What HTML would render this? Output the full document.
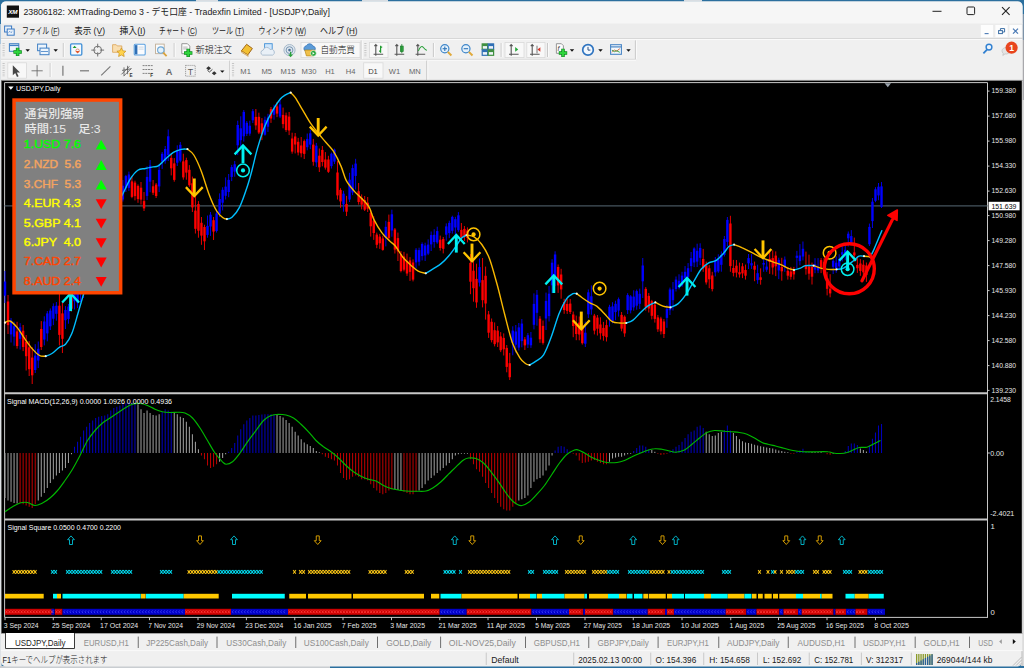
<!DOCTYPE html>
<html lang="ja"><head><meta charset="utf-8"><title>23806182: XMTrading-Demo 3 - [USDJPY,Daily]</title>
<style>
html,body{margin:0;padding:0;background:#f0f0f0;overflow:hidden}
svg{display:block;font-family:"Liberation Sans", "Noto Sans CJK JP", sans-serif}
text{white-space:pre}
</style></head><body>
<svg width="1024" height="668" viewBox="0 0 1024 668">
<rect x="0.00" y="0.00" width="1024.00" height="668.00" fill="#2b6f9e" />
<rect x="0.00" y="24.00" width="1.60" height="20.00" fill="#a9c6de" />
<rect x="0.00" y="44.00" width="1.60" height="624.00" fill="#dfe3e6" />
<rect x="1021.00" y="14.00" width="3.00" height="26.00" fill="#7d93a8" />
<rect x="1021.00" y="40.00" width="3.00" height="60.00" fill="#a8a8ac" />
<rect x="1021.00" y="100.00" width="3.00" height="566.00" fill="#dcdcdc" />
<rect x="0.00" y="666.00" width="330.00" height="2.00" fill="#c9cdd1" />
<rect x="196.00" y="0.00" width="22.00" height="1.60" fill="#d8dde2" />
<rect x="362.00" y="0.00" width="26.00" height="1.60" fill="#d8dde2" />
<rect x="684.00" y="0.00" width="18.00" height="1.60" fill="#d8dde2" />
<rect x="1" y="1.5" width="1021.5" height="665" rx="5" ry="5" fill="#f0f0f0"/>
<line x1="1.70" y1="80.00" x2="1.70" y2="650.00" stroke="#8a8a8a" stroke-width="1" />
<line x1="1022.00" y1="82.00" x2="1022.00" y2="666.00" stroke="#bcbcbc" stroke-width="1" />
<path d="M1 24 V6.5 Q1 1.5 6 1.5 H1017.5 Q1022.5 1.5 1022.5 6.5 V24 Z" fill="#f6f6f6"/>
<rect x="1.00" y="23.50" width="1021.50" height="15.00" fill="#ececec" />
<line x1="1.00" y1="38.60" x2="1022.50" y2="38.60" stroke="#d4d4d4" stroke-width="1" />
<line x1="1.00" y1="39.60" x2="1022.50" y2="39.60" stroke="#fbfbfb" stroke-width="1" />
<rect x="1.00" y="40.00" width="1021.50" height="40.00" fill="#f0f0f0" />
<line x1="1.00" y1="59.30" x2="636.00" y2="59.30" stroke="#d6d6d6" stroke-width="1" />
<line x1="1.00" y1="60.30" x2="636.00" y2="60.30" stroke="#fafafa" stroke-width="1" />
<rect x="6.80" y="5.50" width="12.20" height="12.20" fill="#111" />
<text x="12.90" y="13.82" font-size="5.6" fill="#fff" text-anchor="middle" font-weight="bold" textLength="9.50" lengthAdjust="spacingAndGlyphs" font-style="italic">XM</text>
<text x="23.40" y="15.34" font-size="9.0" fill="#1a1a1a" textLength="306.50" lengthAdjust="spacingAndGlyphs" >23806182: XMTrading-Demo 3 - デモ口座 - Tradexfin Limited - [USDJPY,Daily]</text>
<line x1="932.50" y1="11.30" x2="941.50" y2="11.30" stroke="#222" stroke-width="1" />
<rect x="967" y="7" width="7.6" height="7.6" rx="1" fill="none" stroke="#222" stroke-width="1"/>
<path d="M1002 7.2 L1009.6 14.8 M1009.6 7.2 L1002 14.8" stroke="#222" stroke-width="1.1" fill="none"/>
<g stroke="#3a78c2" stroke-width="1" fill="#eaf2fb"><rect x="4.6" y="26" width="7" height="6"/><rect x="7.2" y="29" width="7" height="6.2"/></g>
<path d="M8.5 32.6 l1.3 -1.2 l1.2 1.2 l1.3 -1.2" stroke="#3a78c2" stroke-width=".7" fill="none"/>
<text x="21.90" y="33.85" font-size="9.3" fill="#1a1a1a" textLength="37.70" lengthAdjust="spacingAndGlyphs" >ファイル (F)</text>
<line x1="52.40" y1="35.60" x2="57.00" y2="35.60" stroke="#1a1a1a" stroke-width="0.6" />
<text x="74.20" y="33.85" font-size="9.3" fill="#1a1a1a" textLength="30.80" lengthAdjust="spacingAndGlyphs" >表示 (V)</text>
<line x1="97.80" y1="35.60" x2="102.40" y2="35.60" stroke="#1a1a1a" stroke-width="0.6" />
<text x="119.50" y="33.85" font-size="9.3" fill="#1a1a1a" textLength="26.00" lengthAdjust="spacingAndGlyphs" >挿入(I)</text>
<line x1="138.30" y1="35.60" x2="142.90" y2="35.60" stroke="#1a1a1a" stroke-width="0.6" />
<text x="159.00" y="33.85" font-size="9.3" fill="#1a1a1a" textLength="38.00" lengthAdjust="spacingAndGlyphs" >チャート (C)</text>
<line x1="189.80" y1="35.60" x2="194.40" y2="35.60" stroke="#1a1a1a" stroke-width="0.6" />
<text x="212.00" y="33.85" font-size="9.3" fill="#1a1a1a" textLength="32.00" lengthAdjust="spacingAndGlyphs" >ツール (T)</text>
<line x1="236.80" y1="35.60" x2="241.40" y2="35.60" stroke="#1a1a1a" stroke-width="0.6" />
<text x="258.50" y="33.85" font-size="9.3" fill="#1a1a1a" textLength="47.50" lengthAdjust="spacingAndGlyphs" >ウィンドウ (W)</text>
<line x1="298.80" y1="35.60" x2="303.40" y2="35.60" stroke="#1a1a1a" stroke-width="0.6" />
<text x="320.00" y="33.85" font-size="9.3" fill="#1a1a1a" textLength="37.50" lengthAdjust="spacingAndGlyphs" >ヘルプ (H)</text>
<line x1="350.30" y1="35.60" x2="354.90" y2="35.60" stroke="#1a1a1a" stroke-width="0.6" />
<rect x="980.80" y="25.00" width="12.30" height="12.20" fill="#fdfdfd" />
<rect x="995.30" y="25.00" width="12.30" height="12.20" fill="#fdfdfd" />
<rect x="1009.50" y="25.00" width="12.30" height="12.20" fill="#fdfdfd" />
<line x1="984.60" y1="33.60" x2="988.60" y2="33.60" stroke="#4a7ab5" stroke-width="1.1" />
<g fill="none" stroke="#3b6ea5" stroke-width="1"><rect x="998.6" y="30.6" width="3.8" height="3"/><path d="M1000.4 30.4 V28.6 H1004.6 V32 H1002.8"/></g>
<path d="M1013 28.6 L1018 33.6 M1018 28.6 L1013 33.6" stroke="#4a7ab5" stroke-width="1.25" fill="none"/>
<line x1="3.6" y1="43" x2="3.6" y2="57" stroke="#c6c6c6" stroke-width="2.2" stroke-dasharray="1 1.3"/>
<line x1="3.6" y1="63" x2="3.6" y2="77" stroke="#c6c6c6" stroke-width="2.2" stroke-dasharray="1 1.3"/>
<rect x="9.4" y="43.7" width="9.4" height="7.6" fill="#eef5fc" stroke="#3f7fc4" stroke-width="1"/>
<line x1="9.40" y1="45.40" x2="18.80" y2="45.40" stroke="#3f7fc4" stroke-width="1.4" />
<path d="M13.400000000000002 51.900000000000006 H21.8 M17.6 47.7 V56.10000000000001" stroke="#0b8a1c" stroke-width="3.5" fill="none"/>
<path d="M14.000000000000002 51.900000000000006 H21.2 M17.6 48.300000000000004 V55.50000000000001" stroke="#2ed43c" stroke-width="2" fill="none"/>
<path d="M25.5 49.300000000000004 h4.4 l-2.2 2.4 z" fill="#111"/>
<rect x="37.6" y="44.1" width="9" height="6.6" fill="#eef5fc" stroke="#3f7fc4" stroke-width="1"/>
<rect x="40" y="48.1" width="9" height="6.6" fill="#eef5fc" stroke="#3f7fc4" stroke-width="1"/>
<line x1="41.00" y1="51.50" x2="48.00" y2="51.50" stroke="#3f7fc4" stroke-width="0.8" />
<path d="M53.5 49.300000000000004 h4.4 l-2.2 2.4 z" fill="#111"/>
<line x1="63.30" y1="43.00" x2="63.30" y2="57.00" stroke="#c4c4c4" stroke-width="1" />
<line x1="64.30" y1="43.00" x2="64.30" y2="57.00" stroke="#fbfbfb" stroke-width="1" />
<rect x="70.6" y="43.900000000000006" width="11.2" height="11.2" rx="1" fill="#f4f9fe" stroke="#3f8fd6" stroke-width="1.3"/>
<path d="M72.6 48.1 l2 -2.4 l2 2.4 z" fill="#1a9a2a"/><path d="M75.6 50.900000000000006 l2 2.6 l2 -2.6 z" fill="#e2572b"/>
<circle cx="77.6" cy="50.7" r="1.7" fill="none" stroke="#e2572b" stroke-width=".6"/>
<circle cx="97.7" cy="50.1" r="3.9" fill="none" stroke="#727272" stroke-width="1"/>
<path d="M97.7 43.7 v4.2 M97.7 52.300000000000004 v4.2 M91.3 50.1 h4.2 M99.9 50.1 h4.2" stroke="#727272" stroke-width="1"/>
<path d="M112.6 44.7 h3.6 l1 1.2 h4.6 v6.4 h-9.2 z" fill="#f9deb0" stroke="#dba253" stroke-width=".8"/>
<path d="M121.4 47.900000000000006 l1.4 2.9 3.1 .4 -2.3 2.2 .6 3.1 -2.8 -1.5 -2.8 1.5 .6 -3.1 -2.3 -2.2 3.1 -.4z" fill="#ffd34d" stroke="#c98f1c" stroke-width=".7"/>
<rect x="134.2" y="44.300000000000004" width="11" height="10.6" rx="1" fill="#fafcff" stroke="#5aa0e0" stroke-width="1.05"/>
<rect x="134.80" y="45.10" width="2.60" height="9.20" fill="#2f6fb5" />
<line x1="138.60" y1="47.10" x2="143.60" y2="47.10" stroke="#b9c7d6" stroke-width="0.7" />
<line x1="138.60" y1="49.10" x2="143.60" y2="49.10" stroke="#b9c7d6" stroke-width="0.7" />
<rect x="155.6" y="44.1" width="8.6" height="9.6" fill="#fbfbfb" stroke="#b9a58a" stroke-width=".8"/>
<circle cx="160.8" cy="50.1" r="3.2" fill="#dff0fb" fill-opacity=".8" stroke="#6fa8d6" stroke-width="1.1"/>
<line x1="163.20" y1="52.70" x2="166.60" y2="56.10" stroke="#d9a23a" stroke-width="1.8" />
<line x1="174.20" y1="43.00" x2="174.20" y2="57.00" stroke="#c4c4c4" stroke-width="1" />
<line x1="175.20" y1="43.00" x2="175.20" y2="57.00" stroke="#fbfbfb" stroke-width="1" />
<path d="M181.8 43.7 h5.6 l2.4 2.4 v7.6 h-8 z" fill="#fcfcfc" stroke="#8c8c8c" stroke-width=".9"/>
<line x1="183.20" y1="47.10" x2="187.60" y2="47.10" stroke="#999" stroke-width="0.7" />
<line x1="183.20" y1="48.90" x2="187.60" y2="48.90" stroke="#999" stroke-width="0.7" />
<path d="M184.0 52.900000000000006 H192.39999999999998 M188.2 48.7 V57.10000000000001" stroke="#0b8a1c" stroke-width="3.5" fill="none"/>
<path d="M184.6 52.900000000000006 H191.79999999999998 M188.2 49.300000000000004 V56.50000000000001" stroke="#2ed43c" stroke-width="2" fill="none"/>
<text x="195.40" y="53.25" font-size="9.3" fill="#111" font-weight="300" textLength="36.60" lengthAdjust="spacingAndGlyphs" >新規注文</text>
<path d="M241.4 50.900000000000006 l5.2 -6.6 l5.8 4.2 l-4.6 6.4 z" fill="#f2c033" stroke="#a0661a" stroke-width="1"/>
<path d="M241.4 50.900000000000006 l6.4 4 l.4 1.4 l-6.6 -4 z" fill="#fff4d6" stroke="#b87a12" stroke-width=".6"/>
<rect x="264.6" y="43.7" width="7.6" height="6.6" fill="#cfe6fb" stroke="#3f8fd6" stroke-width=".9"/>
<path d="M262.6 55.1 a2.6 2.6 0 0 1 .6 -5 a3.6 3.6 0 0 1 6.8 -.6 a2.9 2.9 0 0 1 2.6 5.6 z" fill="#e9f0f7" stroke="#9eb4c9" stroke-width=".8"/>
<circle cx="289.5" cy="50.1" r="5.6" fill="#dfe7ee" stroke="#9fb2c4" stroke-width=".9"/>
<circle cx="289.5" cy="50.1" r="3.4" fill="none" stroke="#6f8fae" stroke-width=".9"/>
<circle cx="289.5" cy="50.1" r="1.3" fill="#4c6f92"/>
<path d="M290.6 51.7 v4.4 M288.8 54.300000000000004 l1.8 2 l1.8 -2" stroke="#2aa13a" stroke-width="1.2" fill="none"/>
<rect x="301" y="42.4" width="59" height="15.200000000000003" fill="#f8f8f8" stroke="#d9d9d9" stroke-width=".8"/>
<path d="M304.4 50.300000000000004 a3 3 0 0 1 2 -4.6 a3.6 3.6 0 0 1 6.6 .4 a2.6 2.6 0 0 1 1.6 4.4 z" fill="#5b9bd8" stroke="#2e6fb3" stroke-width=".7"/>
<path d="M304.8 50.1 h10.2 l-1.6 5.8 h-7 z" fill="#f0c04a" stroke="#b98a1a" stroke-width=".7"/>
<circle cx="313.4" cy="53.300000000000004" r="2.9" fill="#23a637" stroke="#fff" stroke-width=".6"/>
<path d="M312.5 51.900000000000006 v2.8 l2.2 -1.4 z" fill="#fff"/>
<text x="320.40" y="53.25" font-size="9.3" fill="#111" font-weight="300" textLength="34.60" lengthAdjust="spacingAndGlyphs" >自動売買</text>
<line x1="361.20" y1="40.40" x2="361.20" y2="59.00" stroke="#c4c4c4" stroke-width="1" />
<line x1="362.20" y1="40.40" x2="362.20" y2="59.00" stroke="#fbfbfb" stroke-width="1" />
<line x1="365.4" y1="43" x2="365.4" y2="57" stroke="#c6c6c6" stroke-width="2.2" stroke-dasharray="1 1.3"/>
<rect x="369.5" y="42.4" width="18.5" height="15.200000000000003" fill="#f8f8f8" stroke="#d9d9d9" stroke-width=".8"/>
<path d="M373.59999999999997 54.300000000000004 h9.6 M375.8 44.7 v11 M374.4 46.1 l1.4 -1.6 l1.4 1.6" stroke="#555" stroke-width="1.1" fill="none"/>
<path d="M380.6 45.7 v7 M380.6 47.1 h1.6 M379 51.1 h1.6" stroke="#1e9c2e" stroke-width="1.2" fill="none"/>
<path d="M394.59999999999997 54.300000000000004 h9.6 M396.8 44.7 v11 M395.4 46.1 l1.4 -1.6 l1.4 1.6" stroke="#555" stroke-width="1.1" fill="none"/>
<rect x="400.4" y="46.1" width="2.8" height="5.4" fill="#39b54a" stroke="#1b7f2a" stroke-width=".7"/>
<line x1="401.80" y1="44.10" x2="401.80" y2="53.30" stroke="#1b7f2a" stroke-width="0.8" />
<path d="M415.59999999999997 54.300000000000004 h9.6 M417.8 44.7 v11 M416.4 46.1 l1.4 -1.6 l1.4 1.6" stroke="#555" stroke-width="1.1" fill="none"/>
<path d="M418.4 50.900000000000006 q2.6 -6.4 5 -3.4 t3.4 2.6" stroke="#2aa13a" stroke-width="1.1" fill="none"/>
<line x1="433.40" y1="43.00" x2="433.40" y2="57.00" stroke="#c4c4c4" stroke-width="1" />
<line x1="434.40" y1="43.00" x2="434.40" y2="57.00" stroke="#fbfbfb" stroke-width="1" />
<circle cx="444.8" cy="48.7" r="4.1" fill="#e4f1fb" stroke="#3f86c9" stroke-width="1.2"/>
<line x1="447.80" y1="51.90" x2="451.40" y2="55.50" stroke="#e0a93a" stroke-width="2" />
<path d="M442.6 48.7 h4.4" stroke="#2f74b8" stroke-width="1.1"/>
<path d="M444.8 46.5 v4.4" stroke="#2f74b8" stroke-width="1.1"/>
<circle cx="465.9" cy="48.7" r="4.1" fill="#e4f1fb" stroke="#3f86c9" stroke-width="1.2"/>
<line x1="468.90" y1="51.90" x2="472.50" y2="55.50" stroke="#e0a93a" stroke-width="2" />
<path d="M463.7 48.7 h4.4" stroke="#2f74b8" stroke-width="1.1"/>
<rect x="482.2" y="43.900000000000006" width="5.4" height="5.4" fill="#eef3f8" stroke="#3f8f3f" stroke-width="1.2"/>
<rect x="482.2" y="43.900000000000006" width="5.4" height="2.2" fill="#3f8f3f"/>
<rect x="488.2" y="43.900000000000006" width="5.4" height="5.4" fill="#eef3f8" stroke="#2f6fb5" stroke-width="1.2"/>
<rect x="488.2" y="43.900000000000006" width="5.4" height="2.2" fill="#2f6fb5"/>
<rect x="482.2" y="49.900000000000006" width="5.4" height="5.4" fill="#eef3f8" stroke="#2f6fb5" stroke-width="1.2"/>
<rect x="482.2" y="49.900000000000006" width="5.4" height="2.2" fill="#2f6fb5"/>
<rect x="488.2" y="49.900000000000006" width="5.4" height="5.4" fill="#eef3f8" stroke="#3f8f3f" stroke-width="1.2"/>
<rect x="488.2" y="49.900000000000006" width="5.4" height="2.2" fill="#3f8f3f"/>
<line x1="501.20" y1="43.00" x2="501.20" y2="57.00" stroke="#c4c4c4" stroke-width="1" />
<line x1="502.20" y1="43.00" x2="502.20" y2="57.00" stroke="#fbfbfb" stroke-width="1" />
<rect x="505" y="42.4" width="19" height="15.200000000000003" fill="#f8f8f8" stroke="#d9d9d9" stroke-width=".8"/>
<path d="M509.0 54.300000000000004 h9.6 M511.20000000000005 44.7 v11 M509.8 46.1 l1.4 -1.6 l1.4 1.6" stroke="#555" stroke-width="1.1" fill="none"/>
<path d="M515.2 47.1 v4.6 l3 -2.3 z" fill="#23a637"/>
<rect x="526.8" y="42.4" width="18.200000000000045" height="15.200000000000003" fill="#f8f8f8" stroke="#d9d9d9" stroke-width=".8"/>
<path d="M530.0 54.300000000000004 h9.6 M532.2 44.7 v11 M530.8000000000001 46.1 l1.4 -1.6 l1.4 1.6" stroke="#555" stroke-width="1.1" fill="none"/>
<path d="M540.4 47.300000000000004 l-3 2.2 l3 2.2 z" fill="#d6382c"/><path d="M537 45.7 v7.6" stroke="#555" stroke-width=".8"/>
<line x1="547.60" y1="43.00" x2="547.60" y2="57.00" stroke="#c4c4c4" stroke-width="1" />
<line x1="548.60" y1="43.00" x2="548.60" y2="57.00" stroke="#fbfbfb" stroke-width="1" />
<path d="M556.4 43.7 h5 l2 2 v7.6 h-7 z" fill="#fcfcfc" stroke="#8c8c8c" stroke-width=".9"/>
<text x="557.60" y="50.82" font-size="7" fill="#444" font-style="italic">f</text>
<path d="M558.8 52.900000000000006 H567.2 M563 48.7 V57.10000000000001" stroke="#0b8a1c" stroke-width="3.5" fill="none"/>
<path d="M559.4 52.900000000000006 H566.6 M563 49.300000000000004 V56.50000000000001" stroke="#2ed43c" stroke-width="2" fill="none"/>
<path d="M569.8 49.300000000000004 h4.4 l-2.2 2.4 z" fill="#111"/>
<circle cx="588" cy="49.900000000000006" r="5.3" fill="#f2f8fe" stroke="#2f74c0" stroke-width="1.7"/>
<path d="M588 46.900000000000006 v3.2 h2.4" stroke="#2f4f7f" stroke-width="1" fill="none"/>
<path d="M598.3 49.300000000000004 h4.4 l-2.2 2.4 z" fill="#111"/>
<rect x="610.6" y="44.7" width="10.8" height="9.6" fill="#f4f8fc" stroke="#4a86c5" stroke-width="1.1"/>
<line x1="610.60" y1="46.90" x2="621.40" y2="46.90" stroke="#4a86c5" stroke-width="1.2" />
<path d="M612 52.300000000000004 l2.4 -2.4 l2 1.4 l3.4 -2.6" stroke="#d6582c" stroke-width=".9" fill="none"/>
<path d="M612 50.1 l2.4 1.6 l2 -1 l3.4 1.6" stroke="#2aa13a" stroke-width=".9" fill="none"/>
<path d="M626.3 49.300000000000004 h4.4 l-2.2 2.4 z" fill="#111"/>
<line x1="635.40" y1="40.40" x2="635.40" y2="59.00" stroke="#c4c4c4" stroke-width="1" />
<line x1="636.40" y1="40.40" x2="636.40" y2="59.00" stroke="#fbfbfb" stroke-width="1" />
<circle cx="989" cy="47.1" r="2.9" fill="#eaf3fc" stroke="#2f7fd0" stroke-width="1.4"/>
<line x1="987.00" y1="49.70" x2="983.40" y2="53.30" stroke="#2f7fd0" stroke-width="1.8" />
<path d="M1002 50.7 a4 3.2 0 1 1 3 3.2 l-2.2 1.6 l.4 -2.2 a3 3 0 0 1 -1.2 -2.6z" fill="#e4e4e4" stroke="#bdbdbd" stroke-width=".7"/>
<circle cx="1011.6" cy="47.7" r="6.1" fill="#e8451d"/>
<text x="1011.60" y="50.90" font-size="8.6" fill="#fff" text-anchor="middle" font-weight="bold" >1</text>
<rect x="7.8" y="62.8" width="18.599999999999998" height="15.400000000000006" fill="#f8f8f8" stroke="#d9d9d9" stroke-width=".8"/>
<path d="M12.8 65.2 v10 l2.4 -2.2 l1.8 4 l1.6 -.8 l-1.8 -3.8 h3.2 z" fill="#474747"/>
<path d="M37.1 65.2 v11.2 M31.5 70.8 h11.2" stroke="#666" stroke-width=".85"/>
<line x1="50.20" y1="63.00" x2="50.20" y2="77.00" stroke="#c4c4c4" stroke-width="1" />
<line x1="51.20" y1="63.00" x2="51.20" y2="77.00" stroke="#fbfbfb" stroke-width="1" />
<line x1="62.90" y1="65.80" x2="62.90" y2="75.80" stroke="#777" stroke-width="1.2" />
<line x1="80.00" y1="70.80" x2="89.00" y2="70.80" stroke="#777" stroke-width="1.2" />
<line x1="101.20" y1="75.40" x2="110.40" y2="66.40" stroke="#777" stroke-width="1.1" />
<path d="M121.4 74.39999999999999 l8 -8 M123.6 76.2 l8 -8 M124 67.39999999999999 v8.4 M127.6 65.8 v8.4 M122 70.39999999999999 l9 -1.6" stroke="#555" stroke-width=".8" fill="none"/>
<text x="129.60" y="77.06" font-size="4.6" fill="#333" font-weight="bold" >E</text>
<line x1="142.6" y1="65.6" x2="152.8" y2="65.6" stroke="#777" stroke-width=".9" stroke-dasharray="2 .7"/>
<line x1="142.6" y1="69.5" x2="152.8" y2="69.5" stroke="#777" stroke-width=".9" stroke-dasharray="2 .7"/>
<line x1="142.6" y1="73.39999999999999" x2="152.8" y2="73.39999999999999" stroke="#777" stroke-width=".9" stroke-dasharray="2 .7"/>
<text x="150.20" y="77.46" font-size="4.6" fill="#333" font-weight="bold" >F</text>
<text x="169.00" y="74.71" font-size="9.2" fill="#6a6a6a" text-anchor="middle" font-weight="bold" >A</text>
<rect x="185.6" y="65.39999999999999" width="9.6" height="10.8" fill="none" stroke="#777" stroke-width=".8" stroke-dasharray="1 1"/>
<text x="190.40" y="74.77" font-size="8.8" fill="#555" text-anchor="middle" >T</text>
<path d="M208.6 66.2 l2.4 2 l-2.4 2 l-2.4 -2 z M214.2 71.2 l2.4 2 l-2.4 2 l-2.4 -2 z" fill="#333"/>
<path d="M207.4 70.2 l2 1.8 l3 -2.6" stroke="#333" stroke-width=".9" fill="none"/>
<path d="M220.10000000000002 70.39999999999999 h4.4 l-2.2 2.4 z" fill="#111"/>
<line x1="229.80" y1="60.60" x2="229.80" y2="80.00" stroke="#c4c4c4" stroke-width="1" />
<line x1="230.80" y1="60.60" x2="230.80" y2="80.00" stroke="#fbfbfb" stroke-width="1" />
<line x1="233" y1="63" x2="233" y2="77" stroke="#c6c6c6" stroke-width="2.2" stroke-dasharray="1 1.3"/>
<rect x="363.7" y="62.8" width="19.30000000000001" height="15.400000000000006" fill="#f8f8f8" stroke="#d9d9d9" stroke-width=".8"/>
<text x="245.60" y="73.94" font-size="7.6" fill="#666" text-anchor="middle" >M1</text>
<text x="266.70" y="73.94" font-size="7.6" fill="#666" text-anchor="middle" >M5</text>
<text x="288.00" y="73.94" font-size="7.6" fill="#666" text-anchor="middle" >M15</text>
<text x="309.00" y="73.94" font-size="7.6" fill="#666" text-anchor="middle" >M30</text>
<text x="330.00" y="73.94" font-size="7.6" fill="#666" text-anchor="middle" >H1</text>
<text x="350.70" y="73.94" font-size="7.6" fill="#666" text-anchor="middle" >H4</text>
<text x="373.00" y="73.94" font-size="7.6" fill="#444" text-anchor="middle" >D1</text>
<text x="394.50" y="73.94" font-size="7.6" fill="#666" text-anchor="middle" >W1</text>
<text x="414.80" y="73.94" font-size="7.6" fill="#666" text-anchor="middle" >MN</text>
<line x1="426.80" y1="60.60" x2="426.80" y2="80.00" stroke="#c4c4c4" stroke-width="1" />
<line x1="427.80" y1="60.60" x2="427.80" y2="80.00" stroke="#fbfbfb" stroke-width="1" />
<rect x="1.00" y="633.00" width="1021.50" height="17.60" fill="#f0f0f0" />
<line x1="1.00" y1="633.40" x2="1022.50" y2="633.40" stroke="#9a9a9a" stroke-width="1" />
<path d="M5.5 633 V648.5 H74.5 V633" fill="#ffffff" stroke="#3a3a3a" stroke-width="1"/>
<rect x="6.00" y="632.60" width="68.00" height="2.00" fill="#ffffff" />
<text x="15.00" y="645.50" font-size="8.9" fill="#222" textLength="50.50" lengthAdjust="spacingAndGlyphs" >USDJPY,Daily</text>
<text x="83.75" y="645.50" font-size="8.9" fill="#8d8d8d" textLength="45.00" lengthAdjust="spacingAndGlyphs" >EURUSD,H1</text>
<text x="146.25" y="645.50" font-size="8.9" fill="#8d8d8d" textLength="61.75" lengthAdjust="spacingAndGlyphs" >JP225Cash,Daily</text>
<text x="226.25" y="645.50" font-size="8.9" fill="#8d8d8d" textLength="60.00" lengthAdjust="spacingAndGlyphs" >US30Cash,Daily</text>
<text x="303.75" y="645.50" font-size="8.9" fill="#8d8d8d" textLength="65.00" lengthAdjust="spacingAndGlyphs" >US100Cash,Daily</text>
<text x="386.25" y="645.50" font-size="8.9" fill="#8d8d8d" textLength="45.00" lengthAdjust="spacingAndGlyphs" >GOLD,Daily</text>
<text x="448.75" y="645.50" font-size="8.9" fill="#8d8d8d" textLength="67.00" lengthAdjust="spacingAndGlyphs" >OIL-NOV25,Daily</text>
<text x="533.75" y="645.50" font-size="8.9" fill="#8d8d8d" textLength="46.25" lengthAdjust="spacingAndGlyphs" >GBPUSD,H1</text>
<text x="597.50" y="645.50" font-size="8.9" fill="#8d8d8d" textLength="51.25" lengthAdjust="spacingAndGlyphs" >GBPJPY,Daily</text>
<text x="667.00" y="645.50" font-size="8.9" fill="#8d8d8d" textLength="41.75" lengthAdjust="spacingAndGlyphs" >EURJPY,H1</text>
<text x="727.00" y="645.50" font-size="8.9" fill="#8d8d8d" textLength="52.50" lengthAdjust="spacingAndGlyphs" >AUDJPY,Daily</text>
<text x="797.50" y="645.50" font-size="8.9" fill="#8d8d8d" textLength="47.50" lengthAdjust="spacingAndGlyphs" >AUDUSD,H1</text>
<text x="863.00" y="645.50" font-size="8.9" fill="#8d8d8d" textLength="42.60" lengthAdjust="spacingAndGlyphs" >USDJPY,H1</text>
<text x="923.60" y="645.50" font-size="8.9" fill="#8d8d8d" textLength="36.10" lengthAdjust="spacingAndGlyphs" >GOLD,H1</text>
<text x="978.30" y="645.50" font-size="8.9" fill="#8d8d8d" textLength="14.70" lengthAdjust="spacingAndGlyphs" >USD</text>
<line x1="138.25" y1="636.60" x2="138.25" y2="648.00" stroke="#6e6e6e" stroke-width="1" />
<line x1="217.00" y1="636.60" x2="217.00" y2="648.00" stroke="#6e6e6e" stroke-width="1" />
<line x1="295.75" y1="636.60" x2="295.75" y2="648.00" stroke="#6e6e6e" stroke-width="1" />
<line x1="377.50" y1="636.60" x2="377.50" y2="648.00" stroke="#6e6e6e" stroke-width="1" />
<line x1="440.60" y1="636.60" x2="440.60" y2="648.00" stroke="#6e6e6e" stroke-width="1" />
<line x1="525.50" y1="636.60" x2="525.50" y2="648.00" stroke="#6e6e6e" stroke-width="1" />
<line x1="588.75" y1="636.60" x2="588.75" y2="648.00" stroke="#6e6e6e" stroke-width="1" />
<line x1="658.10" y1="636.60" x2="658.10" y2="648.00" stroke="#6e6e6e" stroke-width="1" />
<line x1="718.75" y1="636.60" x2="718.75" y2="648.00" stroke="#6e6e6e" stroke-width="1" />
<line x1="788.25" y1="636.60" x2="788.25" y2="648.00" stroke="#6e6e6e" stroke-width="1" />
<line x1="855.00" y1="636.60" x2="855.00" y2="648.00" stroke="#6e6e6e" stroke-width="1" />
<line x1="915.20" y1="636.60" x2="915.20" y2="648.00" stroke="#6e6e6e" stroke-width="1" />
<line x1="969.50" y1="636.60" x2="969.50" y2="648.00" stroke="#6e6e6e" stroke-width="1" />
<path d="M1002 641.6 l-2.6 -2.4 v4.8 z" fill="#9a9a9a" transform="rotate(180 1000.6 641.6)"/>
<path d="M1012.8 639 v5.2 l3 -2.6 z" fill="#111"/>
<line x1="1.00" y1="650.60" x2="1022.50" y2="650.60" stroke="#fafafa" stroke-width="1" />
<text x="2.50" y="663.11" font-size="9.2" fill="#1a1a1a" font-weight="300" textLength="105.00" lengthAdjust="spacingAndGlyphs" >F1キーでヘルプが表示されます</text>
<line x1="486.25" y1="652.60" x2="486.25" y2="665.00" stroke="#c9c9c9" stroke-width="1" />
<line x1="573.75" y1="652.60" x2="573.75" y2="665.00" stroke="#c9c9c9" stroke-width="1" />
<line x1="650.75" y1="652.60" x2="650.75" y2="665.00" stroke="#c9c9c9" stroke-width="1" />
<line x1="703.75" y1="652.60" x2="703.75" y2="665.00" stroke="#c9c9c9" stroke-width="1" />
<line x1="757.50" y1="652.60" x2="757.50" y2="665.00" stroke="#c9c9c9" stroke-width="1" />
<line x1="809.25" y1="652.60" x2="809.25" y2="665.00" stroke="#c9c9c9" stroke-width="1" />
<line x1="861.40" y1="652.60" x2="861.40" y2="665.00" stroke="#c9c9c9" stroke-width="1" />
<line x1="911.30" y1="652.60" x2="911.30" y2="665.00" stroke="#c9c9c9" stroke-width="1" />
<text x="491.25" y="663.00" font-size="8.9" fill="#1a1a1a" textLength="27.50" lengthAdjust="spacingAndGlyphs" >Default</text>
<text x="578.25" y="663.00" font-size="8.9" fill="#1a1a1a" textLength="63.75" lengthAdjust="spacingAndGlyphs" >2025.02.13 00:00</text>
<text x="655.60" y="663.00" font-size="8.9" fill="#1a1a1a" textLength="40.65" lengthAdjust="spacingAndGlyphs" >O: 154.396</text>
<text x="709.25" y="663.00" font-size="8.9" fill="#1a1a1a" textLength="40.75" lengthAdjust="spacingAndGlyphs" >H: 154.658</text>
<text x="763.00" y="663.00" font-size="8.9" fill="#1a1a1a" textLength="38.25" lengthAdjust="spacingAndGlyphs" >L: 152.692</text>
<text x="814.25" y="663.00" font-size="8.9" fill="#1a1a1a" textLength="39.00" lengthAdjust="spacingAndGlyphs" >C: 152.781</text>
<text x="866.10" y="663.00" font-size="8.9" fill="#1a1a1a" textLength="36.90" lengthAdjust="spacingAndGlyphs" >V: 312317</text>
<text x="936.70" y="663.00" font-size="8.9" fill="#1a1a1a" textLength="55.70" lengthAdjust="spacingAndGlyphs" >269044/144 kb</text>
<rect x="916.00" y="654.00" width="1.30" height="11.00" fill="#8a9a2a" />
<rect x="916.00" y="663.00" width="1.30" height="2.00" fill="#2a5f9a" />
<rect x="918.20" y="654.00" width="1.30" height="11.00" fill="#8a9a2a" />
<rect x="918.20" y="661.75" width="1.30" height="3.25" fill="#2a5f9a" />
<rect x="920.40" y="654.00" width="1.30" height="11.00" fill="#8a9a2a" />
<rect x="920.40" y="660.50" width="1.30" height="4.50" fill="#2a5f9a" />
<rect x="922.60" y="654.00" width="1.30" height="11.00" fill="#8a9a2a" />
<rect x="922.60" y="659.25" width="1.30" height="5.75" fill="#2a5f9a" />
<rect x="924.80" y="654.00" width="1.30" height="11.00" fill="#8a9a2a" />
<rect x="924.80" y="658.00" width="1.30" height="7.00" fill="#2a5f9a" />
<rect x="927.00" y="654.00" width="1.30" height="11.00" fill="#8a9a2a" />
<rect x="927.00" y="656.75" width="1.30" height="8.25" fill="#2a5f9a" />
<rect x="929.20" y="654.00" width="1.30" height="11.00" fill="#8a9a2a" />
<rect x="929.20" y="655.50" width="1.30" height="9.50" fill="#2a5f9a" />
<rect x="931.40" y="654.00" width="1.30" height="11.00" fill="#8a9a2a" />
<rect x="931.40" y="654.25" width="1.30" height="10.75" fill="#2a5f9a" />
<line x1="1013.00" y1="665.60" x2="1021.60" y2="657.00" stroke="#bdbdbd" stroke-width="1" />
<line x1="1016.00" y1="665.60" x2="1021.60" y2="660.00" stroke="#bdbdbd" stroke-width="1" />
<line x1="1019.00" y1="665.60" x2="1021.60" y2="663.00" stroke="#bdbdbd" stroke-width="1" />
<rect x="1.60" y="80.20" width="1020.20" height="552.80" fill="#000000" />
<line x1="1.00" y1="80.40" x2="1022.50" y2="80.40" stroke="#8e8e8e" stroke-width="1" />
<line x1="4.60" y1="82.60" x2="987.50" y2="82.60" stroke="#c8c8c8" stroke-width="1" />
<line x1="4.60" y1="82.60" x2="4.60" y2="617.40" stroke="#c8c8c8" stroke-width="1" />
<line x1="987.50" y1="82.60" x2="987.50" y2="617.40" stroke="#c8c8c8" stroke-width="1" />
<line x1="4.60" y1="617.40" x2="988.00" y2="617.40" stroke="#c8c8c8" stroke-width="1" />
<line x1="4.60" y1="393.30" x2="987.50" y2="393.30" stroke="#c8c8c8" stroke-width="2" />
<line x1="4.60" y1="519.50" x2="987.50" y2="519.50" stroke="#c8c8c8" stroke-width="2" />
<line x1="987.50" y1="91.10" x2="989.50" y2="91.10" stroke="#c8c8c8" stroke-width="1" />
<text x="991.60" y="93.37" font-size="7.7" fill="#e6e6e6" textLength="24.50" lengthAdjust="spacingAndGlyphs" >159.380</text>
<line x1="987.50" y1="116.10" x2="989.50" y2="116.10" stroke="#c8c8c8" stroke-width="1" />
<text x="991.60" y="118.37" font-size="7.7" fill="#e6e6e6" textLength="24.50" lengthAdjust="spacingAndGlyphs" >157.680</text>
<line x1="987.50" y1="141.10" x2="989.50" y2="141.10" stroke="#c8c8c8" stroke-width="1" />
<text x="991.60" y="143.37" font-size="7.7" fill="#e6e6e6" textLength="24.50" lengthAdjust="spacingAndGlyphs" >155.980</text>
<line x1="987.50" y1="166.10" x2="989.50" y2="166.10" stroke="#c8c8c8" stroke-width="1" />
<text x="991.60" y="168.37" font-size="7.7" fill="#e6e6e6" textLength="24.50" lengthAdjust="spacingAndGlyphs" >154.330</text>
<line x1="987.50" y1="191.10" x2="989.50" y2="191.10" stroke="#c8c8c8" stroke-width="1" />
<text x="991.60" y="193.37" font-size="7.7" fill="#e6e6e6" textLength="24.50" lengthAdjust="spacingAndGlyphs" >152.630</text>
<line x1="987.50" y1="215.60" x2="989.50" y2="215.60" stroke="#c8c8c8" stroke-width="1" />
<text x="991.60" y="217.87" font-size="7.7" fill="#e6e6e6" textLength="24.50" lengthAdjust="spacingAndGlyphs" >150.980</text>
<line x1="987.50" y1="240.60" x2="989.50" y2="240.60" stroke="#c8c8c8" stroke-width="1" />
<text x="991.60" y="242.87" font-size="7.7" fill="#e6e6e6" textLength="24.50" lengthAdjust="spacingAndGlyphs" >149.280</text>
<line x1="987.50" y1="265.60" x2="989.50" y2="265.60" stroke="#c8c8c8" stroke-width="1" />
<text x="991.60" y="267.87" font-size="7.7" fill="#e6e6e6" textLength="24.50" lengthAdjust="spacingAndGlyphs" >147.580</text>
<line x1="987.50" y1="290.60" x2="989.50" y2="290.60" stroke="#c8c8c8" stroke-width="1" />
<text x="991.60" y="292.87" font-size="7.7" fill="#e6e6e6" textLength="24.50" lengthAdjust="spacingAndGlyphs" >145.930</text>
<line x1="987.50" y1="315.60" x2="989.50" y2="315.60" stroke="#c8c8c8" stroke-width="1" />
<text x="991.60" y="317.87" font-size="7.7" fill="#e6e6e6" textLength="24.50" lengthAdjust="spacingAndGlyphs" >144.230</text>
<line x1="987.50" y1="340.60" x2="989.50" y2="340.60" stroke="#c8c8c8" stroke-width="1" />
<text x="991.60" y="342.87" font-size="7.7" fill="#e6e6e6" textLength="24.50" lengthAdjust="spacingAndGlyphs" >142.580</text>
<line x1="987.50" y1="365.60" x2="989.50" y2="365.60" stroke="#c8c8c8" stroke-width="1" />
<text x="991.60" y="367.87" font-size="7.7" fill="#e6e6e6" textLength="24.50" lengthAdjust="spacingAndGlyphs" >140.880</text>
<line x1="987.50" y1="390.40" x2="989.50" y2="390.40" stroke="#c8c8c8" stroke-width="1" />
<text x="991.60" y="392.67" font-size="7.7" fill="#e6e6e6" textLength="24.50" lengthAdjust="spacingAndGlyphs" >139.230</text>
<path d="M884.6 83.2 h6.4 l-3.2 4 z" fill="#9aa3ad"/>
<line x1="4.60" y1="205.90" x2="987.50" y2="205.90" stroke="#46545e" stroke-width="1.3" />
<g shape-rendering="auto">
<path d="M5.00 271.0V303.0" stroke="#0000ff" stroke-width=".9"/><rect x="3.80" y="281.5" width="2.4" height="14.2" fill="#0000ff"/>
<path d="M8.02 295.0V334.0" stroke="#ff0000" stroke-width=".9"/><rect x="6.82" y="301.5" width="2.4" height="23.6" fill="#ff0000"/>
<path d="M11.04 318.0V342.5" stroke="#0000ff" stroke-width=".9"/><rect x="9.85" y="320.6" width="2.4" height="13.8" fill="#0000ff"/>
<path d="M14.07 321.6V345.7" stroke="#0000ff" stroke-width=".9"/><rect x="12.87" y="326.2" width="2.4" height="10.4" fill="#0000ff"/>
<path d="M17.09 321.8V348.6" stroke="#ff0000" stroke-width=".9"/><rect x="15.89" y="331.4" width="2.4" height="14.6" fill="#ff0000"/>
<path d="M20.11 323.2V349.5" stroke="#0000ff" stroke-width=".9"/><rect x="18.91" y="327.2" width="2.4" height="11.6" fill="#0000ff"/>
<path d="M23.13 325.0V351.1" stroke="#ff0000" stroke-width=".9"/><rect x="21.93" y="330.7" width="2.4" height="16.3" fill="#ff0000"/>
<path d="M26.16 335.0V370.5" stroke="#ff0000" stroke-width=".9"/><rect x="24.96" y="341.8" width="2.4" height="14.4" fill="#ff0000"/>
<path d="M29.18 341.1V376.0" stroke="#ff0000" stroke-width=".9"/><rect x="27.98" y="347.3" width="2.4" height="21.9" fill="#ff0000"/>
<path d="M32.20 347.2V384.0" stroke="#ff0000" stroke-width=".9"/><rect x="31.00" y="357.6" width="2.4" height="17.7" fill="#ff0000"/>
<path d="M35.23 344.2V373.0" stroke="#0000ff" stroke-width=".9"/><rect x="34.02" y="355.6" width="2.4" height="14.4" fill="#0000ff"/>
<path d="M38.25 341.5V368.0" stroke="#0000ff" stroke-width=".9"/><rect x="37.05" y="348.8" width="2.4" height="11.7" fill="#0000ff"/>
<path d="M41.27 321.1V350.0" stroke="#ff0000" stroke-width=".9"/><rect x="40.07" y="329.0" width="2.4" height="18.0" fill="#ff0000"/>
<path d="M44.29 316.3V345.4" stroke="#0000ff" stroke-width=".9"/><rect x="43.09" y="321.5" width="2.4" height="18.1" fill="#0000ff"/>
<path d="M47.31 311.0V341.3" stroke="#0000ff" stroke-width=".9"/><rect x="46.11" y="313.4" width="2.4" height="20.0" fill="#0000ff"/>
<path d="M50.34 308.4V330.0" stroke="#0000ff" stroke-width=".9"/><rect x="49.14" y="310.6" width="2.4" height="15.7" fill="#0000ff"/>
<path d="M53.36 303.4V325.1" stroke="#0000ff" stroke-width=".9"/><rect x="52.16" y="306.2" width="2.4" height="12.5" fill="#0000ff"/>
<path d="M56.38 302.0V320.7" stroke="#0000ff" stroke-width=".9"/><rect x="55.18" y="305.7" width="2.4" height="8.1" fill="#0000ff"/>
<path d="M59.41 294.0V345.4" stroke="#ff0000" stroke-width=".9"/><rect x="58.20" y="305.7" width="2.4" height="29.2" fill="#ff0000"/>
<path d="M62.43 301.8V353.0" stroke="#ff0000" stroke-width=".9"/><rect x="61.23" y="313.4" width="2.4" height="25.4" fill="#ff0000"/>
<path d="M65.45 306.1V329.0" stroke="#0000ff" stroke-width=".9"/><rect x="64.25" y="310.0" width="2.4" height="10.2" fill="#0000ff"/>
<path d="M68.47 304.0V323.7" stroke="#0000ff" stroke-width=".9"/><rect x="67.27" y="306.6" width="2.4" height="12.3" fill="#0000ff"/>
<path d="M71.50 280.1V311.4" stroke="#ff0000" stroke-width=".9"/><rect x="70.30" y="289.4" width="2.4" height="19.3" fill="#ff0000"/>
<path d="M74.52 277.7V309.5" stroke="#0000ff" stroke-width=".9"/><rect x="73.32" y="280.2" width="2.4" height="21.1" fill="#0000ff"/>
<path d="M77.54 274.9V308.0" stroke="#0000ff" stroke-width=".9"/><rect x="76.34" y="279.0" width="2.4" height="23.7" fill="#0000ff"/>
<path d="M80.56 272.3V302.0" stroke="#0000ff" stroke-width=".9"/><rect x="79.36" y="276.5" width="2.4" height="12.1" fill="#0000ff"/>
<path d="M83.58 268.0V298.0" stroke="#0000ff" stroke-width=".9"/><rect x="82.38" y="271.6" width="2.4" height="12.1" fill="#0000ff"/>
<path d="M86.61 249.6V279.3" stroke="#0000ff" stroke-width=".9"/><rect x="85.41" y="262.7" width="2.4" height="11.6" fill="#0000ff"/>
<path d="M89.63 244.1V274.1" stroke="#0000ff" stroke-width=".9"/><rect x="88.43" y="250.1" width="2.4" height="15.7" fill="#0000ff"/>
<path d="M92.65 241.4V274.8" stroke="#0000ff" stroke-width=".9"/><rect x="91.45" y="248.4" width="2.4" height="19.2" fill="#0000ff"/>
<path d="M95.67 236.0V265.7" stroke="#ff0000" stroke-width=".9"/><rect x="94.47" y="246.5" width="2.4" height="14.6" fill="#ff0000"/>
<path d="M98.70 217.2V243.6" stroke="#ff0000" stroke-width=".9"/><rect x="97.50" y="220.2" width="2.4" height="15.9" fill="#ff0000"/>
<path d="M101.72 221.9V248.4" stroke="#ff0000" stroke-width=".9"/><rect x="100.52" y="225.9" width="2.4" height="20.9" fill="#ff0000"/>
<path d="M104.74 226.8V254.4" stroke="#ff0000" stroke-width=".9"/><rect x="103.54" y="236.9" width="2.4" height="12.4" fill="#ff0000"/>
<path d="M107.77 205.2V235.4" stroke="#0000ff" stroke-width=".9"/><rect x="106.56" y="216.1" width="2.4" height="14.3" fill="#0000ff"/>
<path d="M110.79 201.8V232.3" stroke="#0000ff" stroke-width=".9"/><rect x="109.59" y="207.2" width="2.4" height="22.1" fill="#0000ff"/>
<path d="M113.81 196.0V224.9" stroke="#0000ff" stroke-width=".9"/><rect x="112.61" y="199.8" width="2.4" height="11.3" fill="#0000ff"/>
<path d="M116.83 190.2V212.0" stroke="#0000ff" stroke-width=".9"/><rect x="115.63" y="192.4" width="2.4" height="17.1" fill="#0000ff"/>
<path d="M119.86 184.3V209.8" stroke="#0000ff" stroke-width=".9"/><rect x="118.66" y="188.3" width="2.4" height="13.6" fill="#0000ff"/>
<path d="M122.88 180.0V201.5" stroke="#0000ff" stroke-width=".9"/><rect x="121.68" y="185.7" width="2.4" height="13.8" fill="#0000ff"/>
<path d="M125.90 174.9V192.0" stroke="#0000ff" stroke-width=".9"/><rect x="124.70" y="176.1" width="2.4" height="12.3" fill="#0000ff"/>
<path d="M128.92 171.6V190.9" stroke="#0000ff" stroke-width=".9"/><rect x="127.72" y="174.5" width="2.4" height="13.4" fill="#0000ff"/>
<path d="M131.94 176.6V198.2" stroke="#ff0000" stroke-width=".9"/><rect x="130.75" y="181.4" width="2.4" height="15.5" fill="#ff0000"/>
<path d="M134.97 180.7V200.4" stroke="#ff0000" stroke-width=".9"/><rect x="133.77" y="182.6" width="2.4" height="13.5" fill="#ff0000"/>
<path d="M137.99 184.4V202.8" stroke="#ff0000" stroke-width=".9"/><rect x="136.79" y="185.9" width="2.4" height="13.2" fill="#ff0000"/>
<path d="M141.01 182.0V204.6" stroke="#ff0000" stroke-width=".9"/><rect x="139.81" y="187.7" width="2.4" height="11.9" fill="#ff0000"/>
<path d="M144.03 192.0V211.0" stroke="#ff0000" stroke-width=".9"/><rect x="142.84" y="201.1" width="2.4" height="7.3" fill="#ff0000"/>
<path d="M147.06 166.3V200.0" stroke="#0000ff" stroke-width=".9"/><rect x="145.86" y="176.9" width="2.4" height="19.0" fill="#0000ff"/>
<path d="M150.08 160.0V192.2" stroke="#0000ff" stroke-width=".9"/><rect x="148.88" y="165.5" width="2.4" height="16.2" fill="#0000ff"/>
<path d="M153.10 180.0V195.0" stroke="#ff0000" stroke-width=".9"/><rect x="151.90" y="186.3" width="2.4" height="6.5" fill="#ff0000"/>
<path d="M156.12 183.0V198.0" stroke="#ff0000" stroke-width=".9"/><rect x="154.93" y="184.6" width="2.4" height="11.4" fill="#ff0000"/>
<path d="M159.15 164.0V192.0" stroke="#0000ff" stroke-width=".9"/><rect x="157.95" y="169.9" width="2.4" height="16.5" fill="#0000ff"/>
<path d="M162.17 152.0V168.9" stroke="#0000ff" stroke-width=".9"/><rect x="160.97" y="153.8" width="2.4" height="7.7" fill="#0000ff"/>
<path d="M165.19 146.0V163.7" stroke="#0000ff" stroke-width=".9"/><rect x="163.99" y="149.0" width="2.4" height="12.1" fill="#0000ff"/>
<path d="M168.22 129.5V161.0" stroke="#0000ff" stroke-width=".9"/><rect x="167.02" y="136.3" width="2.4" height="18.8" fill="#0000ff"/>
<path d="M171.24 153.8V175.4" stroke="#ff0000" stroke-width=".9"/><rect x="170.04" y="157.9" width="2.4" height="10.4" fill="#ff0000"/>
<path d="M174.26 158.1V181.7" stroke="#ff0000" stroke-width=".9"/><rect x="173.06" y="163.4" width="2.4" height="16.5" fill="#ff0000"/>
<path d="M177.28 145.3V166.0" stroke="#0000ff" stroke-width=".9"/><rect x="176.08" y="150.4" width="2.4" height="12.3" fill="#0000ff"/>
<path d="M180.31 142.0V162.3" stroke="#0000ff" stroke-width=".9"/><rect x="179.11" y="144.8" width="2.4" height="15.8" fill="#0000ff"/>
<path d="M183.33 153.7V179.7" stroke="#ff0000" stroke-width=".9"/><rect x="182.13" y="161.4" width="2.4" height="16.0" fill="#ff0000"/>
<path d="M186.35 157.7V179.7" stroke="#ff0000" stroke-width=".9"/><rect x="185.15" y="160.1" width="2.4" height="12.5" fill="#ff0000"/>
<path d="M189.37 165.1V186.8" stroke="#ff0000" stroke-width=".9"/><rect x="188.17" y="169.8" width="2.4" height="15.4" fill="#ff0000"/>
<path d="M192.40 176.6V212.0" stroke="#ff0000" stroke-width=".9"/><rect x="191.20" y="183.3" width="2.4" height="24.1" fill="#ff0000"/>
<path d="M195.42 194.9V233.5" stroke="#ff0000" stroke-width=".9"/><rect x="194.22" y="210.6" width="2.4" height="18.2" fill="#ff0000"/>
<path d="M198.44 201.1V237.7" stroke="#ff0000" stroke-width=".9"/><rect x="197.24" y="204.0" width="2.4" height="26.7" fill="#ff0000"/>
<path d="M201.46 217.0V244.8" stroke="#ff0000" stroke-width=".9"/><rect x="200.26" y="222.8" width="2.4" height="12.8" fill="#ff0000"/>
<path d="M204.48 224.7V250.0" stroke="#ff0000" stroke-width=".9"/><rect x="203.28" y="227.0" width="2.4" height="14.3" fill="#ff0000"/>
<path d="M207.51 215.5V237.7" stroke="#0000ff" stroke-width=".9"/><rect x="206.31" y="225.9" width="2.4" height="9.0" fill="#0000ff"/>
<path d="M210.53 212.0V235.9" stroke="#0000ff" stroke-width=".9"/><rect x="209.33" y="214.7" width="2.4" height="11.8" fill="#0000ff"/>
<path d="M213.55 217.0V240.0" stroke="#ff0000" stroke-width=".9"/><rect x="212.35" y="220.2" width="2.4" height="11.4" fill="#ff0000"/>
<path d="M216.57 209.7V232.6" stroke="#0000ff" stroke-width=".9"/><rect x="215.38" y="213.5" width="2.4" height="17.5" fill="#0000ff"/>
<path d="M219.60 193.4V217.0" stroke="#0000ff" stroke-width=".9"/><rect x="218.40" y="199.0" width="2.4" height="14.6" fill="#0000ff"/>
<path d="M222.62 187.3V210.4" stroke="#0000ff" stroke-width=".9"/><rect x="221.42" y="189.8" width="2.4" height="12.9" fill="#0000ff"/>
<path d="M225.64 177.4V199.5" stroke="#0000ff" stroke-width=".9"/><rect x="224.44" y="186.6" width="2.4" height="9.2" fill="#0000ff"/>
<path d="M228.66 174.0V197.2" stroke="#0000ff" stroke-width=".9"/><rect x="227.47" y="179.9" width="2.4" height="12.1" fill="#0000ff"/>
<path d="M231.69 164.9V181.1" stroke="#0000ff" stroke-width=".9"/><rect x="230.49" y="167.1" width="2.4" height="9.8" fill="#0000ff"/>
<path d="M234.71 161.0V176.7" stroke="#0000ff" stroke-width=".9"/><rect x="233.51" y="164.3" width="2.4" height="7.3" fill="#0000ff"/>
<path d="M237.73 120.7V155.1" stroke="#0000ff" stroke-width=".9"/><rect x="236.53" y="125.0" width="2.4" height="20.3" fill="#0000ff"/>
<path d="M240.75 116.3V147.0" stroke="#0000ff" stroke-width=".9"/><rect x="239.56" y="128.3" width="2.4" height="11.9" fill="#0000ff"/>
<path d="M243.78 110.0V141.6" stroke="#0000ff" stroke-width=".9"/><rect x="242.58" y="111.9" width="2.4" height="24.4" fill="#0000ff"/>
<path d="M246.80 121.0V136.0" stroke="#0000ff" stroke-width=".9"/><rect x="245.60" y="122.8" width="2.4" height="11.0" fill="#0000ff"/>
<path d="M249.82 120.7V135.7" stroke="#0000ff" stroke-width=".9"/><rect x="248.62" y="125.7" width="2.4" height="7.9" fill="#0000ff"/>
<path d="M252.84 109.0V123.0" stroke="#0000ff" stroke-width=".9"/><rect x="251.65" y="111.2" width="2.4" height="9.1" fill="#0000ff"/>
<path d="M255.87 109.0V129.8" stroke="#ff0000" stroke-width=".9"/><rect x="254.67" y="116.9" width="2.4" height="8.5" fill="#ff0000"/>
<path d="M258.89 112.7V134.1" stroke="#ff0000" stroke-width=".9"/><rect x="257.69" y="116.8" width="2.4" height="15.7" fill="#ff0000"/>
<path d="M261.91 118.1V140.1" stroke="#ff0000" stroke-width=".9"/><rect x="260.71" y="123.3" width="2.4" height="11.0" fill="#ff0000"/>
<path d="M264.94 116.6V135.7" stroke="#0000ff" stroke-width=".9"/><rect x="263.74" y="119.8" width="2.4" height="14.9" fill="#0000ff"/>
<path d="M267.96 113.8V131.9" stroke="#0000ff" stroke-width=".9"/><rect x="266.76" y="117.5" width="2.4" height="9.2" fill="#0000ff"/>
<path d="M270.98 107.0V122.9" stroke="#ff0000" stroke-width=".9"/><rect x="269.78" y="109.1" width="2.4" height="9.4" fill="#ff0000"/>
<path d="M274.00 104.7V119.7" stroke="#0000ff" stroke-width=".9"/><rect x="272.80" y="108.5" width="2.4" height="6.3" fill="#0000ff"/>
<path d="M277.02 102.1V117.1" stroke="#ff0000" stroke-width=".9"/><rect x="275.82" y="106.4" width="2.4" height="7.2" fill="#ff0000"/>
<path d="M280.05 100.3V118.1" stroke="#0000ff" stroke-width=".9"/><rect x="278.85" y="104.4" width="2.4" height="12.1" fill="#0000ff"/>
<path d="M283.07 107.6V128.3" stroke="#ff0000" stroke-width=".9"/><rect x="281.87" y="114.9" width="2.4" height="9.2" fill="#ff0000"/>
<path d="M286.09 112.6V131.9" stroke="#ff0000" stroke-width=".9"/><rect x="284.89" y="115.4" width="2.4" height="14.6" fill="#ff0000"/>
<path d="M289.12 112.0V135.1" stroke="#ff0000" stroke-width=".9"/><rect x="287.92" y="116.6" width="2.4" height="13.9" fill="#ff0000"/>
<path d="M292.14 132.7V153.7" stroke="#ff0000" stroke-width=".9"/><rect x="290.94" y="138.5" width="2.4" height="13.1" fill="#ff0000"/>
<path d="M295.16 133.0V153.4" stroke="#ff0000" stroke-width=".9"/><rect x="293.96" y="136.5" width="2.4" height="8.0" fill="#ff0000"/>
<path d="M298.18 137.9V155.4" stroke="#ff0000" stroke-width=".9"/><rect x="296.98" y="141.8" width="2.4" height="10.7" fill="#ff0000"/>
<path d="M301.20 137.0V157.3" stroke="#ff0000" stroke-width=".9"/><rect x="300.00" y="145.5" width="2.4" height="7.8" fill="#ff0000"/>
<path d="M304.23 139.5V159.0" stroke="#ff0000" stroke-width=".9"/><rect x="303.03" y="141.1" width="2.4" height="12.8" fill="#ff0000"/>
<path d="M307.25 133.5V150.3" stroke="#0000ff" stroke-width=".9"/><rect x="306.05" y="138.9" width="2.4" height="8.3" fill="#0000ff"/>
<path d="M310.27 129.9V149.1" stroke="#0000ff" stroke-width=".9"/><rect x="309.07" y="133.3" width="2.4" height="11.3" fill="#0000ff"/>
<path d="M313.30 138.9V165.7" stroke="#ff0000" stroke-width=".9"/><rect x="312.10" y="144.6" width="2.4" height="17.2" fill="#ff0000"/>
<path d="M316.32 142.9V167.0" stroke="#0000ff" stroke-width=".9"/><rect x="315.12" y="145.7" width="2.4" height="16.7" fill="#0000ff"/>
<path d="M319.34 148.5V172.0" stroke="#ff0000" stroke-width=".9"/><rect x="318.14" y="155.7" width="2.4" height="11.6" fill="#ff0000"/>
<path d="M322.36 146.0V166.3" stroke="#ff0000" stroke-width=".9"/><rect x="321.16" y="149.9" width="2.4" height="12.1" fill="#ff0000"/>
<path d="M325.38 152.1V169.6" stroke="#ff0000" stroke-width=".9"/><rect x="324.19" y="159.5" width="2.4" height="8.1" fill="#ff0000"/>
<path d="M328.41 155.8V172.9" stroke="#ff0000" stroke-width=".9"/><rect x="327.21" y="159.5" width="2.4" height="12.3" fill="#ff0000"/>
<path d="M331.43 152.6V168.5" stroke="#0000ff" stroke-width=".9"/><rect x="330.23" y="153.7" width="2.4" height="12.4" fill="#0000ff"/>
<path d="M334.45 148.6V164.0" stroke="#0000ff" stroke-width=".9"/><rect x="333.25" y="149.6" width="2.4" height="12.0" fill="#0000ff"/>
<path d="M337.48 161.0V199.5" stroke="#ff0000" stroke-width=".9"/><rect x="336.28" y="172.5" width="2.4" height="22.9" fill="#ff0000"/>
<path d="M340.50 188.2V207.8" stroke="#ff0000" stroke-width=".9"/><rect x="339.30" y="189.9" width="2.4" height="11.5" fill="#ff0000"/>
<path d="M343.52 190.8V211.7" stroke="#0000ff" stroke-width=".9"/><rect x="342.32" y="193.7" width="2.4" height="10.6" fill="#0000ff"/>
<path d="M346.54 195.9V216.0" stroke="#ff0000" stroke-width=".9"/><rect x="345.34" y="204.0" width="2.4" height="7.7" fill="#ff0000"/>
<path d="M349.56 172.8V202.0" stroke="#0000ff" stroke-width=".9"/><rect x="348.37" y="179.7" width="2.4" height="19.8" fill="#0000ff"/>
<path d="M352.59 164.7V195.1" stroke="#0000ff" stroke-width=".9"/><rect x="351.39" y="168.1" width="2.4" height="24.4" fill="#0000ff"/>
<path d="M355.61 158.8V189.5" stroke="#0000ff" stroke-width=".9"/><rect x="354.41" y="163.6" width="2.4" height="12.3" fill="#0000ff"/>
<path d="M358.63 183.0V204.6" stroke="#ff0000" stroke-width=".9"/><rect x="357.43" y="191.2" width="2.4" height="10.8" fill="#ff0000"/>
<path d="M361.65 194.4V209.4" stroke="#ff0000" stroke-width=".9"/><rect x="360.45" y="197.8" width="2.4" height="6.9" fill="#ff0000"/>
<path d="M364.68 196.0V211.0" stroke="#ff0000" stroke-width=".9"/><rect x="363.48" y="200.0" width="2.4" height="9.7" fill="#ff0000"/>
<path d="M367.70 197.0V212.0" stroke="#ff0000" stroke-width=".9"/><rect x="366.50" y="202.7" width="2.4" height="6.0" fill="#ff0000"/>
<path d="M370.72 209.9V236.6" stroke="#ff0000" stroke-width=".9"/><rect x="369.52" y="212.9" width="2.4" height="13.4" fill="#ff0000"/>
<path d="M373.75 216.3V239.9" stroke="#ff0000" stroke-width=".9"/><rect x="372.55" y="220.6" width="2.4" height="12.4" fill="#ff0000"/>
<path d="M376.77 232.6V248.2" stroke="#ff0000" stroke-width=".9"/><rect x="375.57" y="234.6" width="2.4" height="10.2" fill="#ff0000"/>
<path d="M379.79 233.9V248.9" stroke="#ff0000" stroke-width=".9"/><rect x="378.59" y="236.6" width="2.4" height="6.7" fill="#ff0000"/>
<path d="M382.81 235.7V250.7" stroke="#ff0000" stroke-width=".9"/><rect x="381.61" y="238.5" width="2.4" height="11.4" fill="#ff0000"/>
<path d="M385.83 220.8V246.4" stroke="#0000ff" stroke-width=".9"/><rect x="384.63" y="226.8" width="2.4" height="10.7" fill="#0000ff"/>
<path d="M388.86 214.6V240.8" stroke="#ff0000" stroke-width=".9"/><rect x="387.66" y="221.9" width="2.4" height="16.2" fill="#ff0000"/>
<path d="M391.88 209.7V236.7" stroke="#0000ff" stroke-width=".9"/><rect x="390.68" y="214.3" width="2.4" height="16.2" fill="#0000ff"/>
<path d="M394.90 228.0V253.5" stroke="#ff0000" stroke-width=".9"/><rect x="393.70" y="229.5" width="2.4" height="20.1" fill="#ff0000"/>
<path d="M397.93 232.6V261.0" stroke="#ff0000" stroke-width=".9"/><rect x="396.73" y="238.1" width="2.4" height="13.4" fill="#ff0000"/>
<path d="M400.95 251.0V272.4" stroke="#ff0000" stroke-width=".9"/><rect x="399.75" y="254.3" width="2.4" height="16.7" fill="#ff0000"/>
<path d="M403.97 251.9V271.4" stroke="#ff0000" stroke-width=".9"/><rect x="402.77" y="256.5" width="2.4" height="13.2" fill="#ff0000"/>
<path d="M406.99 253.6V275.9" stroke="#ff0000" stroke-width=".9"/><rect x="405.79" y="261.3" width="2.4" height="12.2" fill="#ff0000"/>
<path d="M410.01 257.2V280.9" stroke="#ff0000" stroke-width=".9"/><rect x="408.81" y="260.4" width="2.4" height="11.5" fill="#ff0000"/>
<path d="M413.04 259.4V281.4" stroke="#ff0000" stroke-width=".9"/><rect x="411.84" y="262.5" width="2.4" height="17.1" fill="#ff0000"/>
<path d="M416.06 248.1V268.6" stroke="#0000ff" stroke-width=".9"/><rect x="414.86" y="249.8" width="2.4" height="12.6" fill="#0000ff"/>
<path d="M419.08 247.7V265.6" stroke="#0000ff" stroke-width=".9"/><rect x="417.88" y="250.1" width="2.4" height="11.6" fill="#0000ff"/>
<path d="M422.11 242.4V260.4" stroke="#0000ff" stroke-width=".9"/><rect x="420.91" y="244.0" width="2.4" height="12.1" fill="#0000ff"/>
<path d="M425.13 242.7V261.0" stroke="#0000ff" stroke-width=".9"/><rect x="423.93" y="245.5" width="2.4" height="9.9" fill="#0000ff"/>
<path d="M428.15 239.4V255.1" stroke="#0000ff" stroke-width=".9"/><rect x="426.95" y="244.6" width="2.4" height="9.0" fill="#0000ff"/>
<path d="M431.17 231.5V251.0" stroke="#0000ff" stroke-width=".9"/><rect x="429.97" y="235.1" width="2.4" height="9.3" fill="#0000ff"/>
<path d="M434.19 229.2V247.7" stroke="#0000ff" stroke-width=".9"/><rect x="433.00" y="234.8" width="2.4" height="7.2" fill="#0000ff"/>
<path d="M437.22 226.7V243.8" stroke="#0000ff" stroke-width=".9"/><rect x="436.02" y="231.1" width="2.4" height="11.3" fill="#0000ff"/>
<path d="M440.24 235.6V250.6" stroke="#ff0000" stroke-width=".9"/><rect x="439.04" y="239.7" width="2.4" height="8.3" fill="#ff0000"/>
<path d="M443.26 237.0V253.4" stroke="#ff0000" stroke-width=".9"/><rect x="442.06" y="239.1" width="2.4" height="9.7" fill="#ff0000"/>
<path d="M446.28 223.4V240.7" stroke="#0000ff" stroke-width=".9"/><rect x="445.08" y="226.4" width="2.4" height="8.3" fill="#0000ff"/>
<path d="M449.31 220.7V238.0" stroke="#0000ff" stroke-width=".9"/><rect x="448.11" y="222.9" width="2.4" height="10.2" fill="#0000ff"/>
<path d="M452.33 215.7V233.6" stroke="#0000ff" stroke-width=".9"/><rect x="451.13" y="216.9" width="2.4" height="13.9" fill="#0000ff"/>
<path d="M455.35 216.8V235.6" stroke="#0000ff" stroke-width=".9"/><rect x="454.15" y="219.2" width="2.4" height="8.3" fill="#0000ff"/>
<path d="M458.38 212.1V231.8" stroke="#0000ff" stroke-width=".9"/><rect x="457.18" y="215.3" width="2.4" height="14.8" fill="#0000ff"/>
<path d="M461.40 223.0V239.8" stroke="#ff0000" stroke-width=".9"/><rect x="460.20" y="229.9" width="2.4" height="7.7" fill="#ff0000"/>
<path d="M464.42 226.0V241.0" stroke="#ff0000" stroke-width=".9"/><rect x="463.22" y="228.9" width="2.4" height="8.1" fill="#ff0000"/>
<path d="M467.44 227.4V242.4" stroke="#ff0000" stroke-width=".9"/><rect x="466.24" y="230.4" width="2.4" height="7.5" fill="#ff0000"/>
<path d="M470.46 254.0V294.2" stroke="#ff0000" stroke-width=".9"/><rect x="469.26" y="262.9" width="2.4" height="18.8" fill="#ff0000"/>
<path d="M473.49 258.0V301.7" stroke="#ff0000" stroke-width=".9"/><rect x="472.29" y="270.7" width="2.4" height="17.5" fill="#ff0000"/>
<path d="M476.51 263.7V307.8" stroke="#ff0000" stroke-width=".9"/><rect x="475.31" y="278.9" width="2.4" height="23.5" fill="#ff0000"/>
<path d="M479.53 258.5V286.5" stroke="#0000ff" stroke-width=".9"/><rect x="478.33" y="267.1" width="2.4" height="15.5" fill="#0000ff"/>
<path d="M482.56 258.0V307.4" stroke="#ff0000" stroke-width=".9"/><rect x="481.36" y="280.1" width="2.4" height="20.1" fill="#ff0000"/>
<path d="M485.58 266.6V319.6" stroke="#ff0000" stroke-width=".9"/><rect x="484.38" y="275.8" width="2.4" height="27.7" fill="#ff0000"/>
<path d="M488.60 311.0V337.9" stroke="#ff0000" stroke-width=".9"/><rect x="487.40" y="314.4" width="2.4" height="18.3" fill="#ff0000"/>
<path d="M491.62 318.5V342.4" stroke="#ff0000" stroke-width=".9"/><rect x="490.42" y="321.8" width="2.4" height="18.3" fill="#ff0000"/>
<path d="M494.64 322.4V346.4" stroke="#ff0000" stroke-width=".9"/><rect x="493.44" y="330.2" width="2.4" height="13.9" fill="#ff0000"/>
<path d="M497.67 326.0V347.0" stroke="#ff0000" stroke-width=".9"/><rect x="496.47" y="330.6" width="2.4" height="11.8" fill="#ff0000"/>
<path d="M500.69 332.1V352.1" stroke="#ff0000" stroke-width=".9"/><rect x="499.49" y="336.4" width="2.4" height="13.8" fill="#ff0000"/>
<path d="M503.71 333.4V355.5" stroke="#ff0000" stroke-width=".9"/><rect x="502.51" y="337.9" width="2.4" height="11.4" fill="#ff0000"/>
<path d="M506.74 345.0V372.3" stroke="#ff0000" stroke-width=".9"/><rect x="505.54" y="347.9" width="2.4" height="19.0" fill="#ff0000"/>
<path d="M509.76 352.9V380.0" stroke="#ff0000" stroke-width=".9"/><rect x="508.56" y="363.2" width="2.4" height="14.0" fill="#ff0000"/>
<path d="M512.78 326.3V355.3" stroke="#0000ff" stroke-width=".9"/><rect x="511.58" y="330.6" width="2.4" height="12.1" fill="#0000ff"/>
<path d="M515.80 325.0V352.7" stroke="#0000ff" stroke-width=".9"/><rect x="514.60" y="331.5" width="2.4" height="13.2" fill="#0000ff"/>
<path d="M518.83 323.0V350.5" stroke="#0000ff" stroke-width=".9"/><rect x="517.62" y="327.4" width="2.4" height="20.2" fill="#0000ff"/>
<path d="M521.85 319.0V347.3" stroke="#0000ff" stroke-width=".9"/><rect x="520.65" y="323.6" width="2.4" height="17.5" fill="#0000ff"/>
<path d="M524.87 337.0V350.0" stroke="#ff0000" stroke-width=".9"/><rect x="523.67" y="339.4" width="2.4" height="6.0" fill="#ff0000"/>
<path d="M527.89 333.0V348.0" stroke="#0000ff" stroke-width=".9"/><rect x="526.69" y="335.2" width="2.4" height="9.3" fill="#0000ff"/>
<path d="M530.91 332.0V347.9" stroke="#0000ff" stroke-width=".9"/><rect x="529.71" y="337.7" width="2.4" height="7.6" fill="#0000ff"/>
<path d="M533.94 293.4V329.4" stroke="#0000ff" stroke-width=".9"/><rect x="532.74" y="303.9" width="2.4" height="20.9" fill="#0000ff"/>
<path d="M536.96 290.0V325.7" stroke="#0000ff" stroke-width=".9"/><rect x="535.76" y="294.8" width="2.4" height="18.0" fill="#0000ff"/>
<path d="M539.98 316.1V342.8" stroke="#ff0000" stroke-width=".9"/><rect x="538.78" y="318.7" width="2.4" height="20.6" fill="#ff0000"/>
<path d="M543.00 320.5V344.6" stroke="#ff0000" stroke-width=".9"/><rect x="541.80" y="325.9" width="2.4" height="17.0" fill="#ff0000"/>
<path d="M546.03 292.6V330.0" stroke="#0000ff" stroke-width=".9"/><rect x="544.83" y="300.9" width="2.4" height="17.6" fill="#0000ff"/>
<path d="M549.05 286.0V321.5" stroke="#0000ff" stroke-width=".9"/><rect x="547.85" y="293.7" width="2.4" height="22.4" fill="#0000ff"/>
<path d="M552.07 259.2V293.1" stroke="#0000ff" stroke-width=".9"/><rect x="550.87" y="262.7" width="2.4" height="22.6" fill="#0000ff"/>
<path d="M555.10 251.3V286.2" stroke="#0000ff" stroke-width=".9"/><rect x="553.89" y="254.5" width="2.4" height="21.3" fill="#0000ff"/>
<path d="M558.12 264.5V292.9" stroke="#ff0000" stroke-width=".9"/><rect x="556.92" y="267.0" width="2.4" height="18.4" fill="#ff0000"/>
<path d="M561.14 268.8V298.7" stroke="#ff0000" stroke-width=".9"/><rect x="559.94" y="274.5" width="2.4" height="14.9" fill="#ff0000"/>
<path d="M564.16 298.8V313.8" stroke="#ff0000" stroke-width=".9"/><rect x="562.96" y="302.0" width="2.4" height="8.0" fill="#ff0000"/>
<path d="M567.18 298.9V313.9" stroke="#ff0000" stroke-width=".9"/><rect x="565.98" y="304.0" width="2.4" height="6.9" fill="#ff0000"/>
<path d="M570.21 299.0V314.0" stroke="#ff0000" stroke-width=".9"/><rect x="569.01" y="303.6" width="2.4" height="8.4" fill="#ff0000"/>
<path d="M573.23 311.5V337.2" stroke="#ff0000" stroke-width=".9"/><rect x="572.03" y="314.5" width="2.4" height="11.5" fill="#ff0000"/>
<path d="M576.25 315.6V340.2" stroke="#ff0000" stroke-width=".9"/><rect x="575.05" y="323.8" width="2.4" height="10.2" fill="#ff0000"/>
<path d="M579.27 316.5V340.3" stroke="#ff0000" stroke-width=".9"/><rect x="578.07" y="322.6" width="2.4" height="11.9" fill="#ff0000"/>
<path d="M582.30 322.7V344.6" stroke="#ff0000" stroke-width=".9"/><rect x="581.10" y="327.5" width="2.4" height="15.7" fill="#ff0000"/>
<path d="M585.32 321.7V347.0" stroke="#0000ff" stroke-width=".9"/><rect x="584.12" y="332.7" width="2.4" height="11.0" fill="#0000ff"/>
<path d="M588.34 289.5V318.1" stroke="#0000ff" stroke-width=".9"/><rect x="587.14" y="292.3" width="2.4" height="22.0" fill="#0000ff"/>
<path d="M591.37 285.4V314.7" stroke="#0000ff" stroke-width=".9"/><rect x="590.16" y="296.3" width="2.4" height="13.1" fill="#0000ff"/>
<path d="M594.39 313.9V334.4" stroke="#ff0000" stroke-width=".9"/><rect x="593.19" y="315.6" width="2.4" height="15.0" fill="#ff0000"/>
<path d="M597.41 315.0V335.5" stroke="#ff0000" stroke-width=".9"/><rect x="596.21" y="317.6" width="2.4" height="11.1" fill="#ff0000"/>
<path d="M600.43 317.3V339.5" stroke="#ff0000" stroke-width=".9"/><rect x="599.23" y="324.5" width="2.4" height="8.8" fill="#ff0000"/>
<path d="M603.46 321.9V340.7" stroke="#ff0000" stroke-width=".9"/><rect x="602.25" y="327.9" width="2.4" height="8.0" fill="#ff0000"/>
<path d="M606.48 319.8V341.5" stroke="#ff0000" stroke-width=".9"/><rect x="605.28" y="325.1" width="2.4" height="12.1" fill="#ff0000"/>
<path d="M609.50 304.8V326.7" stroke="#0000ff" stroke-width=".9"/><rect x="608.30" y="306.8" width="2.4" height="12.3" fill="#0000ff"/>
<path d="M612.52 302.2V323.3" stroke="#0000ff" stroke-width=".9"/><rect x="611.32" y="306.4" width="2.4" height="14.7" fill="#0000ff"/>
<path d="M615.54 300.7V320.2" stroke="#0000ff" stroke-width=".9"/><rect x="614.34" y="303.8" width="2.4" height="8.3" fill="#0000ff"/>
<path d="M618.57 297.5V316.6" stroke="#0000ff" stroke-width=".9"/><rect x="617.37" y="299.2" width="2.4" height="11.3" fill="#0000ff"/>
<path d="M621.59 312.0V331.3" stroke="#ff0000" stroke-width=".9"/><rect x="620.39" y="314.9" width="2.4" height="13.7" fill="#ff0000"/>
<path d="M624.61 315.4V336.8" stroke="#ff0000" stroke-width=".9"/><rect x="623.41" y="316.7" width="2.4" height="16.7" fill="#ff0000"/>
<path d="M627.63 293.2V314.0" stroke="#0000ff" stroke-width=".9"/><rect x="626.43" y="295.1" width="2.4" height="15.0" fill="#0000ff"/>
<path d="M630.66 295.1V313.4" stroke="#0000ff" stroke-width=".9"/><rect x="629.46" y="296.4" width="2.4" height="14.0" fill="#0000ff"/>
<path d="M633.68 290.3V310.7" stroke="#0000ff" stroke-width=".9"/><rect x="632.48" y="296.6" width="2.4" height="10.8" fill="#0000ff"/>
<path d="M636.70 289.5V309.7" stroke="#0000ff" stroke-width=".9"/><rect x="635.50" y="291.1" width="2.4" height="14.6" fill="#0000ff"/>
<path d="M639.73 288.6V309.0" stroke="#0000ff" stroke-width=".9"/><rect x="638.52" y="293.8" width="2.4" height="10.0" fill="#0000ff"/>
<path d="M642.75 258.0V298.0" stroke="#0000ff" stroke-width=".9"/><rect x="641.55" y="265.5" width="2.4" height="15.8" fill="#0000ff"/>
<path d="M645.77 287.1V310.7" stroke="#ff0000" stroke-width=".9"/><rect x="644.57" y="288.9" width="2.4" height="17.8" fill="#ff0000"/>
<path d="M648.79 293.0V312.5" stroke="#ff0000" stroke-width=".9"/><rect x="647.59" y="295.9" width="2.4" height="12.6" fill="#ff0000"/>
<path d="M651.81 299.9V319.4" stroke="#ff0000" stroke-width=".9"/><rect x="650.61" y="301.2" width="2.4" height="14.6" fill="#ff0000"/>
<path d="M654.84 302.7V322.6" stroke="#ff0000" stroke-width=".9"/><rect x="653.64" y="304.7" width="2.4" height="14.2" fill="#ff0000"/>
<path d="M657.86 315.0V331.9" stroke="#ff0000" stroke-width=".9"/><rect x="656.66" y="317.4" width="2.4" height="11.9" fill="#ff0000"/>
<path d="M660.88 316.8V334.5" stroke="#ff0000" stroke-width=".9"/><rect x="659.68" y="318.5" width="2.4" height="12.9" fill="#ff0000"/>
<path d="M663.90 319.0V338.0" stroke="#ff0000" stroke-width=".9"/><rect x="662.70" y="321.5" width="2.4" height="12.5" fill="#ff0000"/>
<path d="M666.93 304.9V327.8" stroke="#0000ff" stroke-width=".9"/><rect x="665.73" y="308.9" width="2.4" height="9.0" fill="#0000ff"/>
<path d="M669.95 287.6V315.0" stroke="#0000ff" stroke-width=".9"/><rect x="668.75" y="289.5" width="2.4" height="20.7" fill="#0000ff"/>
<path d="M672.97 282.0V310.5" stroke="#0000ff" stroke-width=".9"/><rect x="671.77" y="289.3" width="2.4" height="10.9" fill="#0000ff"/>
<path d="M676.00 276.5V291.5" stroke="#0000ff" stroke-width=".9"/><rect x="674.79" y="279.6" width="2.4" height="9.4" fill="#0000ff"/>
<path d="M679.02 274.3V289.4" stroke="#0000ff" stroke-width=".9"/><rect x="677.82" y="280.8" width="2.4" height="6.6" fill="#0000ff"/>
<path d="M682.04 271.8V286.8" stroke="#0000ff" stroke-width=".9"/><rect x="680.84" y="275.6" width="2.4" height="9.7" fill="#0000ff"/>
<path d="M685.06 266.1V281.7" stroke="#0000ff" stroke-width=".9"/><rect x="683.86" y="271.8" width="2.4" height="6.0" fill="#0000ff"/>
<path d="M688.09 263.1V278.4" stroke="#0000ff" stroke-width=".9"/><rect x="686.88" y="268.2" width="2.4" height="8.7" fill="#0000ff"/>
<path d="M691.11 252.0V271.8" stroke="#0000ff" stroke-width=".9"/><rect x="689.91" y="258.2" width="2.4" height="7.9" fill="#0000ff"/>
<path d="M694.13 247.3V267.1" stroke="#0000ff" stroke-width=".9"/><rect x="692.93" y="248.5" width="2.4" height="14.0" fill="#0000ff"/>
<path d="M697.15 243.7V267.0" stroke="#0000ff" stroke-width=".9"/><rect x="695.95" y="250.8" width="2.4" height="10.8" fill="#0000ff"/>
<path d="M700.17 243.3V265.1" stroke="#0000ff" stroke-width=".9"/><rect x="698.97" y="247.9" width="2.4" height="9.9" fill="#0000ff"/>
<path d="M703.20 248.9V271.8" stroke="#ff0000" stroke-width=".9"/><rect x="702.00" y="259.0" width="2.4" height="9.2" fill="#ff0000"/>
<path d="M706.22 261.6V284.6" stroke="#ff0000" stroke-width=".9"/><rect x="705.02" y="265.5" width="2.4" height="16.9" fill="#ff0000"/>
<path d="M709.24 265.1V288.2" stroke="#ff0000" stroke-width=".9"/><rect x="708.04" y="268.3" width="2.4" height="11.0" fill="#ff0000"/>
<path d="M712.26 271.8V291.4" stroke="#ff0000" stroke-width=".9"/><rect x="711.06" y="275.5" width="2.4" height="13.6" fill="#ff0000"/>
<path d="M715.29 257.0V276.4" stroke="#0000ff" stroke-width=".9"/><rect x="714.09" y="260.4" width="2.4" height="11.9" fill="#0000ff"/>
<path d="M718.31 254.3V272.8" stroke="#0000ff" stroke-width=".9"/><rect x="717.11" y="259.4" width="2.4" height="12.0" fill="#0000ff"/>
<path d="M721.33 251.4V271.7" stroke="#0000ff" stroke-width=".9"/><rect x="720.13" y="254.9" width="2.4" height="9.9" fill="#0000ff"/>
<path d="M724.36 236.0V256.5" stroke="#0000ff" stroke-width=".9"/><rect x="723.15" y="239.0" width="2.4" height="15.9" fill="#0000ff"/>
<path d="M727.38 217.0V246.3" stroke="#0000ff" stroke-width=".9"/><rect x="726.18" y="219.9" width="2.4" height="22.0" fill="#0000ff"/>
<path d="M730.40 215.8V271.8" stroke="#ff0000" stroke-width=".9"/><rect x="729.20" y="223.5" width="2.4" height="42.6" fill="#ff0000"/>
<path d="M733.42 259.9V276.4" stroke="#ff0000" stroke-width=".9"/><rect x="732.22" y="268.0" width="2.4" height="4.9" fill="#ff0000"/>
<path d="M736.44 260.0V277.4" stroke="#ff0000" stroke-width=".9"/><rect x="735.24" y="265.7" width="2.4" height="6.9" fill="#ff0000"/>
<path d="M739.47 262.6V277.6" stroke="#ff0000" stroke-width=".9"/><rect x="738.27" y="272.2" width="2.4" height="2.2" fill="#ff0000"/>
<path d="M742.49 263.1V278.1" stroke="#ff0000" stroke-width=".9"/><rect x="741.29" y="266.3" width="2.4" height="7.1" fill="#ff0000"/>
<path d="M745.51 264.6V279.6" stroke="#ff0000" stroke-width=".9"/><rect x="744.31" y="270.0" width="2.4" height="5.7" fill="#ff0000"/>
<path d="M748.53 254.0V269.0" stroke="#0000ff" stroke-width=".9"/><rect x="747.33" y="258.1" width="2.4" height="5.2" fill="#0000ff"/>
<path d="M751.56 254.0V269.0" stroke="#0000ff" stroke-width=".9"/><rect x="750.36" y="263.2" width="2.4" height="2.2" fill="#0000ff"/>
<path d="M754.58 261.6V281.2" stroke="#ff0000" stroke-width=".9"/><rect x="753.38" y="265.8" width="2.4" height="3.9" fill="#ff0000"/>
<path d="M757.60 264.7V283.8" stroke="#0000ff" stroke-width=".9"/><rect x="756.40" y="273.2" width="2.4" height="6.9" fill="#0000ff"/>
<path d="M760.62 268.3V284.7" stroke="#ff0000" stroke-width=".9"/><rect x="759.42" y="277.3" width="2.4" height="2.6" fill="#ff0000"/>
<path d="M763.65 259.0V271.8" stroke="#0000ff" stroke-width=".9"/><rect x="762.45" y="263.0" width="2.4" height="1.6" fill="#0000ff"/>
<path d="M766.67 259.0V271.8" stroke="#0000ff" stroke-width=".9"/><rect x="765.47" y="266.6" width="2.4" height="3.1" fill="#0000ff"/>
<path d="M769.69 249.2V273.9" stroke="#ff0000" stroke-width=".9"/><rect x="768.49" y="258.8" width="2.4" height="3.2" fill="#ff0000"/>
<path d="M772.72 250.4V274.6" stroke="#ff0000" stroke-width=".9"/><rect x="771.51" y="258.1" width="2.4" height="9.4" fill="#ff0000"/>
<path d="M775.74 251.4V276.1" stroke="#ff0000" stroke-width=".9"/><rect x="774.54" y="255.6" width="2.4" height="10.7" fill="#ff0000"/>
<path d="M778.76 257.7V279.1" stroke="#0000ff" stroke-width=".9"/><rect x="777.56" y="259.9" width="2.4" height="10.5" fill="#0000ff"/>
<path d="M781.78 257.8V280.7" stroke="#ff0000" stroke-width=".9"/><rect x="780.58" y="267.0" width="2.4" height="4.3" fill="#ff0000"/>
<path d="M784.80 256.5V271.8" stroke="#0000ff" stroke-width=".9"/><rect x="783.60" y="259.6" width="2.4" height="6.7" fill="#0000ff"/>
<path d="M787.83 266.9V279.6" stroke="#ff0000" stroke-width=".9"/><rect x="786.63" y="270.8" width="2.4" height="4.9" fill="#ff0000"/>
<path d="M790.85 266.9V279.6" stroke="#ff0000" stroke-width=".9"/><rect x="789.65" y="271.5" width="2.4" height="5.3" fill="#ff0000"/>
<path d="M793.87 266.9V279.6" stroke="#ff0000" stroke-width=".9"/><rect x="792.67" y="270.9" width="2.4" height="3.5" fill="#ff0000"/>
<path d="M796.89 250.9V268.0" stroke="#0000ff" stroke-width=".9"/><rect x="795.69" y="255.7" width="2.4" height="2.2" fill="#0000ff"/>
<path d="M799.92 244.1V265.3" stroke="#0000ff" stroke-width=".9"/><rect x="798.72" y="255.5" width="2.4" height="5.6" fill="#0000ff"/>
<path d="M802.94 241.5V260.4" stroke="#0000ff" stroke-width=".9"/><rect x="801.74" y="248.8" width="2.4" height="7.7" fill="#0000ff"/>
<path d="M805.96 251.6V274.7" stroke="#ff0000" stroke-width=".9"/><rect x="804.76" y="265.0" width="2.4" height="4.1" fill="#ff0000"/>
<path d="M808.99 254.7V279.7" stroke="#ff0000" stroke-width=".9"/><rect x="807.78" y="266.5" width="2.4" height="7.2" fill="#ff0000"/>
<path d="M812.01 262.6V284.5" stroke="#ff0000" stroke-width=".9"/><rect x="810.81" y="266.7" width="2.4" height="10.0" fill="#ff0000"/>
<path d="M815.03 258.2V273.2" stroke="#0000ff" stroke-width=".9"/><rect x="813.83" y="264.3" width="2.4" height="5.3" fill="#0000ff"/>
<path d="M818.05 258.1V273.1" stroke="#0000ff" stroke-width=".9"/><rect x="816.85" y="267.3" width="2.4" height="3.1" fill="#0000ff"/>
<path d="M821.08 258.1V273.1" stroke="#ff0000" stroke-width=".9"/><rect x="819.88" y="260.1" width="2.4" height="7.3" fill="#ff0000"/>
<path d="M824.10 258.0V273.0" stroke="#ff0000" stroke-width=".9"/><rect x="822.90" y="262.2" width="2.4" height="3.5" fill="#ff0000"/>
<path d="M827.12 272.0V295.4" stroke="#ff0000" stroke-width=".9"/><rect x="825.92" y="278.1" width="2.4" height="10.7" fill="#ff0000"/>
<path d="M830.14 274.2V297.3" stroke="#ff0000" stroke-width=".9"/><rect x="828.94" y="288.7" width="2.4" height="4.7" fill="#ff0000"/>
<path d="M833.16 259.0V274.0" stroke="#0000ff" stroke-width=".9"/><rect x="831.96" y="260.8" width="2.4" height="6.0" fill="#0000ff"/>
<path d="M836.19 256.3V272.8" stroke="#0000ff" stroke-width=".9"/><rect x="834.99" y="262.7" width="2.4" height="5.7" fill="#0000ff"/>
<path d="M839.21 254.3V269.9" stroke="#0000ff" stroke-width=".9"/><rect x="838.01" y="259.3" width="2.4" height="7.1" fill="#0000ff"/>
<path d="M842.23 246.5V261.5" stroke="#0000ff" stroke-width=".9"/><rect x="841.03" y="252.2" width="2.4" height="2.5" fill="#0000ff"/>
<path d="M845.25 244.3V260.2" stroke="#0000ff" stroke-width=".9"/><rect x="844.05" y="249.8" width="2.4" height="3.4" fill="#0000ff"/>
<path d="M848.28 231.5V246.5" stroke="#0000ff" stroke-width=".9"/><rect x="847.08" y="233.7" width="2.4" height="4.6" fill="#0000ff"/>
<path d="M851.30 230.1V245.1" stroke="#0000ff" stroke-width=".9"/><rect x="850.10" y="236.1" width="2.4" height="6.8" fill="#0000ff"/>
<path d="M854.32 237.6V261.8" stroke="#ff0000" stroke-width=".9"/><rect x="853.12" y="252.4" width="2.4" height="3.0" fill="#ff0000"/>
<path d="M857.35 256.7V272.9" stroke="#ff0000" stroke-width=".9"/><rect x="856.14" y="264.9" width="2.4" height="3.3" fill="#ff0000"/>
<path d="M860.37 259.1V275.8" stroke="#ff0000" stroke-width=".9"/><rect x="859.17" y="263.5" width="2.4" height="7.4" fill="#ff0000"/>
<path d="M863.39 260.2V278.3" stroke="#ff0000" stroke-width=".9"/><rect x="862.19" y="264.7" width="2.4" height="7.6" fill="#ff0000"/>
<path d="M866.41 262.5V281.9" stroke="#ff0000" stroke-width=".9"/><rect x="865.21" y="265.5" width="2.4" height="9.6" fill="#ff0000"/>
<path d="M869.43 223.6V246.0" stroke="#0000ff" stroke-width=".9"/><rect x="868.23" y="226.9" width="2.4" height="17.3" fill="#0000ff"/>
<path d="M872.46 198.0V228.0" stroke="#0000ff" stroke-width=".9"/><rect x="871.26" y="201.7" width="2.4" height="19.4" fill="#0000ff"/>
<path d="M875.48 187.2V202.2" stroke="#0000ff" stroke-width=".9"/><rect x="874.28" y="189.3" width="2.4" height="11.5" fill="#0000ff"/>
<path d="M878.50 183.0V200.2" stroke="#0000ff" stroke-width=".9"/><rect x="877.30" y="186.7" width="2.4" height="8.7" fill="#0000ff"/>
<path d="M881.52 182.0V208.0" stroke="#0000ff" stroke-width=".9"/><rect x="880.32" y="186.4" width="2.4" height="20.5" fill="#0000ff"/>
</g>
<path d="M5.0 322.7C5.8 322.4 7.8 320.2 9.9 321.0C12.0 321.8 14.8 324.7 17.3 327.6C19.8 330.6 22.2 335.2 24.7 338.7C27.2 342.2 29.6 345.8 32.1 348.6C34.6 351.4 37.2 354.2 39.5 355.5C41.8 356.8 44.7 356.1 45.7 356.2" fill="none" stroke="#f8b800" stroke-width="1.4" stroke-linecap="round" stroke-linejoin="round"/>
<path d="M45.7 356.2C46.7 355.8 49.6 355.0 51.9 353.5C54.2 352.0 57.0 348.9 59.3 347.4C61.6 345.8 63.4 346.5 65.5 344.2C67.6 341.9 69.7 338.8 71.7 333.8C73.8 328.8 76.0 320.2 77.8 314.0C79.6 307.8 80.8 303.7 82.8 296.7C84.8 289.7 87.1 281.3 90.0 272.0C92.9 262.7 96.7 250.3 100.0 241.0C103.3 231.7 106.2 223.8 110.0 216.0C113.8 208.2 119.1 200.6 122.5 194.4C125.9 188.2 127.6 183.1 130.2 179.1C132.8 175.1 135.3 172.0 137.8 170.2C140.3 168.4 142.9 169.1 145.4 168.5C147.9 167.9 151.0 167.3 153.1 166.9C155.2 166.5 156.1 167.2 158.2 165.9C160.3 164.6 163.3 161.1 165.8 158.8C168.3 156.6 170.9 154.0 173.4 152.4C175.9 150.8 178.8 150.0 181.1 149.4C183.4 148.8 186.3 149.2 187.4 149.1" fill="none" stroke="#00bfff" stroke-width="1.4" stroke-linecap="round" stroke-linejoin="round"/>
<path d="M187.4 149.1C188.5 150.1 191.5 151.3 193.8 155.0C196.1 158.7 198.9 164.9 201.4 171.5C203.9 178.1 206.6 187.8 209.1 194.4C211.6 201.0 214.4 207.1 216.7 211.0C219.0 214.9 221.4 216.5 223.1 217.8C224.8 219.2 226.3 218.9 226.9 219.1" fill="none" stroke="#f8b800" stroke-width="1.4" stroke-linecap="round" stroke-linejoin="round"/>
<path d="M226.9 219.1C227.8 218.8 229.9 219.3 232.0 217.3C234.1 215.3 237.1 212.2 239.6 207.1C242.1 202.0 245.1 193.2 247.2 186.8C249.3 180.5 250.6 175.4 252.3 169.0C254.0 162.6 255.3 155.8 257.4 148.6C259.5 141.4 262.4 132.1 265.0 125.7C267.6 119.3 270.1 114.9 272.7 110.4C275.2 106.0 278.2 101.5 280.3 99.0C282.4 96.5 283.4 96.3 285.1 95.2C286.8 94.1 289.8 93.0 290.7 92.6" fill="none" stroke="#00bfff" stroke-width="1.4" stroke-linecap="round" stroke-linejoin="round"/>
<path d="M290.7 92.6C291.5 93.4 293.3 94.7 295.3 97.7C297.3 100.7 300.4 106.2 302.9 110.4C305.4 114.7 307.9 119.4 310.5 123.2C313.1 127.0 315.6 130.1 318.2 133.3C320.8 136.5 323.3 139.3 325.8 142.3C328.3 145.3 330.8 147.2 333.4 151.2C335.9 155.2 339.0 161.5 341.1 166.4C343.2 171.3 344.1 176.4 346.2 180.4C348.3 184.4 351.3 187.6 353.8 190.6C356.3 193.6 358.8 195.4 361.4 198.2C363.9 200.9 367.0 203.5 369.1 207.1C371.2 210.7 372.0 215.7 374.1 219.9C376.2 224.2 379.2 229.1 381.8 232.6C384.4 236.1 387.1 238.6 389.4 240.8C391.6 243.0 393.1 243.2 395.3 246.0C397.6 248.8 400.4 254.2 402.9 257.3C405.4 260.4 407.9 262.6 410.5 264.9C413.1 267.2 415.6 269.8 418.2 271.2C420.8 272.6 424.5 272.9 425.8 273.3" fill="none" stroke="#f8b800" stroke-width="1.4" stroke-linecap="round" stroke-linejoin="round"/>
<path d="M425.8 273.3C427.1 272.5 430.8 270.3 433.4 268.7C435.9 267.1 438.6 265.7 441.1 263.6C443.7 261.5 446.2 259.0 448.7 256.0C451.2 253.0 454.2 248.8 456.3 245.8C458.4 242.8 459.7 240.0 461.4 238.2C463.1 236.4 465.6 235.6 466.5 235.1" fill="none" stroke="#00bfff" stroke-width="1.4" stroke-linecap="round" stroke-linejoin="round"/>
<path d="M466.5 235.1C467.8 235.4 471.6 235.3 474.1 236.9C476.7 238.5 479.2 240.9 481.8 244.5C484.4 248.1 486.9 251.9 489.4 258.5C491.9 265.1 494.4 274.7 497.0 284.0C499.6 293.3 502.1 304.8 504.7 314.5C507.2 324.2 509.8 335.3 512.3 342.5C514.8 349.7 517.6 354.3 519.9 357.8C522.1 361.3 524.2 362.5 525.8 363.7C527.4 364.9 529.0 364.8 529.6 365.0" fill="none" stroke="#f8b800" stroke-width="1.4" stroke-linecap="round" stroke-linejoin="round"/>
<path d="M529.6 365.0C530.7 364.4 533.7 362.8 536.0 361.1C538.3 359.4 541.1 358.8 543.6 354.8C546.1 350.8 548.7 343.8 551.2 337.0C553.8 330.2 556.4 320.4 558.9 314.0C561.4 307.6 564.2 302.2 566.5 298.8C568.8 295.4 571.2 294.6 572.9 293.7C574.6 292.8 576.1 293.7 576.7 293.7" fill="none" stroke="#00bfff" stroke-width="1.4" stroke-linecap="round" stroke-linejoin="round"/>
<path d="M576.7 293.7C577.6 294.3 579.7 296.0 581.8 297.5C583.9 299.0 586.9 301.1 589.4 302.6C591.9 304.1 594.5 304.5 597.0 306.4C599.5 308.3 602.2 311.4 604.7 314.0C607.2 316.6 609.8 320.2 612.3 321.7C614.8 323.2 617.6 322.8 619.9 323.0C622.2 323.2 625.2 323.0 626.3 323.0" fill="none" stroke="#f8b800" stroke-width="1.4" stroke-linecap="round" stroke-linejoin="round"/>
<path d="M626.3 323.0C627.4 322.6 630.4 322.1 632.7 320.4C635.0 318.7 637.8 315.2 640.3 312.8C642.8 310.4 645.1 307.9 647.6 306.1C650.1 304.4 654.0 302.9 655.3 302.3" fill="none" stroke="#00bfff" stroke-width="1.4" stroke-linecap="round" stroke-linejoin="round"/>
<path d="M655.3 302.3C656.6 302.9 660.4 305.2 662.9 306.1C665.4 307.0 669.2 307.2 670.5 307.4" fill="none" stroke="#f8b800" stroke-width="1.4" stroke-linecap="round" stroke-linejoin="round"/>
<path d="M670.5 307.4C671.8 306.8 675.7 305.7 678.2 303.6C680.8 301.5 683.3 298.3 685.8 294.7C688.3 291.1 690.8 286.2 693.4 282.0C696.0 277.8 698.5 272.4 701.1 269.2C703.7 266.0 706.2 264.4 708.7 262.9C711.2 261.4 713.8 262.0 716.3 260.3C718.8 258.6 721.9 255.0 724.0 252.7C726.1 250.4 727.4 247.7 729.1 246.3C730.8 245.0 733.3 244.9 734.1 244.6" fill="none" stroke="#00bfff" stroke-width="1.4" stroke-linecap="round" stroke-linejoin="round"/>
<path d="M734.1 244.6C735.4 245.1 738.8 246.2 741.8 247.6C744.8 248.9 748.6 251.0 752.0 252.7C755.4 254.4 758.7 256.3 762.1 257.8C765.5 259.3 768.9 260.3 772.3 261.6C775.7 262.9 780.0 264.3 782.5 265.4C785.0 266.5 785.7 267.3 787.6 268.1C789.5 268.9 792.9 269.7 794.0 270.0" fill="none" stroke="#f8b800" stroke-width="1.4" stroke-linecap="round" stroke-linejoin="round"/>
<path d="M794.0 270.0C795.1 269.7 798.5 268.8 800.4 268.1C802.3 267.4 803.2 266.0 805.4 265.6C807.6 265.2 812.2 265.6 813.6 265.6" fill="none" stroke="#00bfff" stroke-width="1.4" stroke-linecap="round" stroke-linejoin="round"/>
<path d="M813.6 265.6C814.8 266.0 818.2 267.5 820.7 268.1C823.2 268.7 825.6 269.2 828.3 269.4C830.9 269.6 835.2 269.4 836.6 269.4" fill="none" stroke="#f8b800" stroke-width="1.4" stroke-linecap="round" stroke-linejoin="round"/>
<path d="M836.6 269.4C837.8 269.2 840.7 269.6 843.6 268.1C846.5 266.6 851.2 262.5 853.8 260.5C856.3 258.5 857.2 256.9 858.9 256.2C860.6 255.5 863.1 256.2 864.0 256.2" fill="none" stroke="#00bfff" stroke-width="1.4" stroke-linecap="round" stroke-linejoin="round"/>
<path d="M864.0 256.2C865.0 256.3 869.2 256.6 870.3 256.7" fill="none" stroke="#f8b800" stroke-width="1.4" stroke-linecap="round" stroke-linejoin="round"/>
<path d="M870.3 256.7C870.9 255.4 872.2 253.4 874.1 249.1C876.0 244.8 880.5 233.8 881.8 230.7" fill="none" stroke="#00bfff" stroke-width="1.4" stroke-linecap="round" stroke-linejoin="round"/>
<circle cx="5.0" cy="322.7" r="1.1" fill="#ffffff" fill-opacity=".85"/>
<circle cx="45.7" cy="356.2" r="1.1" fill="#ffffff" fill-opacity=".85"/>
<circle cx="187.4" cy="149.1" r="1.1" fill="#ffffff" fill-opacity=".85"/>
<circle cx="226.9" cy="219.1" r="1.1" fill="#ffffff" fill-opacity=".85"/>
<circle cx="290.7" cy="92.6" r="1.1" fill="#ffffff" fill-opacity=".85"/>
<circle cx="425.8" cy="273.3" r="1.1" fill="#ffffff" fill-opacity=".85"/>
<circle cx="466.5" cy="235.1" r="1.1" fill="#ffffff" fill-opacity=".85"/>
<circle cx="529.6" cy="365.0" r="1.1" fill="#ffffff" fill-opacity=".85"/>
<circle cx="576.7" cy="293.7" r="1.1" fill="#ffffff" fill-opacity=".85"/>
<circle cx="626.3" cy="323.0" r="1.1" fill="#ffffff" fill-opacity=".85"/>
<circle cx="655.3" cy="302.3" r="1.1" fill="#ffffff" fill-opacity=".85"/>
<circle cx="670.5" cy="307.4" r="1.1" fill="#ffffff" fill-opacity=".85"/>
<circle cx="734.1" cy="244.6" r="1.1" fill="#ffffff" fill-opacity=".85"/>
<circle cx="794.0" cy="270.0" r="1.1" fill="#ffffff" fill-opacity=".85"/>
<circle cx="813.6" cy="265.6" r="1.1" fill="#ffffff" fill-opacity=".85"/>
<circle cx="836.6" cy="269.4" r="1.1" fill="#ffffff" fill-opacity=".85"/>
<circle cx="864.0" cy="256.2" r="1.1" fill="#ffffff" fill-opacity=".85"/>
<circle cx="870.3" cy="256.7" r="1.1" fill="#ffffff" fill-opacity=".85"/>
<path d="M70.6 293.9 V311.1" fill="none" stroke="#00f0f0" stroke-width="2.9"/><path d="M62.199999999999996 302.5 L70.6 293.5 L79.0 302.5" fill="none" stroke="#00f0f0" stroke-width="2.3" stroke-linejoin="miter"/>
<path d="M194.3 178.5 V195.7" fill="none" stroke="#ffc400" stroke-width="2.9"/><path d="M185.9 187.1 L194.3 196.1 L202.70000000000002 187.1" fill="none" stroke="#ffc400" stroke-width="2.3" stroke-linejoin="miter"/>
<path d="M243 145.8 V163.0" fill="none" stroke="#00f0f0" stroke-width="2.9"/><path d="M234.6 154.4 L243 145.4 L251.4 154.4" fill="none" stroke="#00f0f0" stroke-width="2.3" stroke-linejoin="miter"/>
<circle cx="243" cy="170.4" r="6.3" fill="none" stroke="#00f0f0" stroke-width="1.5"/><circle cx="243" cy="170.4" r="2.1" fill="#00f0f0"/>
<path d="M318.2 118 V135.2" fill="none" stroke="#ffc400" stroke-width="2.9"/><path d="M309.8 126.6 L318.2 135.6 L326.59999999999997 126.6" fill="none" stroke="#ffc400" stroke-width="2.3" stroke-linejoin="miter"/>
<path d="M456.3 235.4 V252.6" fill="none" stroke="#00f0f0" stroke-width="2.9"/><path d="M447.90000000000003 244.0 L456.3 235 L464.7 244.0" fill="none" stroke="#00f0f0" stroke-width="2.3" stroke-linejoin="miter"/>
<circle cx="473.6" cy="234.4" r="6.3" fill="none" stroke="#ffc400" stroke-width="1.5"/><circle cx="473.6" cy="234.4" r="2.1" fill="#ffc400"/>
<path d="M472 243.6 V260.8" fill="none" stroke="#ffc400" stroke-width="2.9"/><path d="M463.6 252.2 L472 261.2 L480.4 252.2" fill="none" stroke="#ffc400" stroke-width="2.3" stroke-linejoin="miter"/>
<path d="M553.8 275.79999999999995 V293.0" fill="none" stroke="#00f0f0" stroke-width="2.9"/><path d="M545.4 284.4 L553.8 275.4 L562.1999999999999 284.4" fill="none" stroke="#00f0f0" stroke-width="2.3" stroke-linejoin="miter"/>
<path d="M581.3 311.6 V328.80000000000007" fill="none" stroke="#ffc400" stroke-width="2.9"/><path d="M572.9 320.20000000000005 L581.3 329.20000000000005 L589.6999999999999 320.20000000000005" fill="none" stroke="#ffc400" stroke-width="2.3" stroke-linejoin="miter"/>
<circle cx="599.6" cy="288.6" r="6.3" fill="none" stroke="#ffc400" stroke-width="1.5"/><circle cx="599.6" cy="288.6" r="2.1" fill="#ffc400"/>
<path d="M687 278.4 V295.6" fill="none" stroke="#00f0f0" stroke-width="2.9"/><path d="M678.6 287.0 L687 278 L695.4 287.0" fill="none" stroke="#00f0f0" stroke-width="2.3" stroke-linejoin="miter"/>
<path d="M763 240.4 V257.6" fill="none" stroke="#ffc400" stroke-width="2.9"/><path d="M754.6 249.0 L763 258.0 L771.4 249.0" fill="none" stroke="#ffc400" stroke-width="2.3" stroke-linejoin="miter"/>
<circle cx="829.6" cy="252.8" r="6.3" fill="none" stroke="#ffc400" stroke-width="1.5"/><circle cx="829.6" cy="252.8" r="2.1" fill="#ffc400"/>
<path d="M847.6 252.0 V269.2" fill="none" stroke="#00f0f0" stroke-width="2.9"/><path d="M839.2 260.6 L847.6 251.6 L856.0 260.6" fill="none" stroke="#00f0f0" stroke-width="2.3" stroke-linejoin="miter"/>
<circle cx="847.6" cy="269.2" r="6.3" fill="none" stroke="#00f0f0" stroke-width="1.5"/><circle cx="847.6" cy="269.2" r="2.1" fill="#00f0f0"/>
<circle cx="849.3" cy="268.8" r="25" fill="none" stroke="#ff0000" stroke-width="3.4"/>
<path d="M862 280.8 L892.4 219.6" stroke="#ff0000" stroke-width="3.2" stroke-linecap="round" fill="none"/>
<path d="M897.3 210 L897 220.4 L887.8 215.4 Z" fill="#ff0000" stroke="#ff0000" stroke-width="1.6" stroke-linejoin="round"/>
<rect x="988.60" y="201.80" width="31.00" height="8.50" fill="#ffffff" />
<text x="991.40" y="208.87" font-size="7.7" fill="#000" textLength="25.00" lengthAdjust="spacingAndGlyphs" >151.639</text>
<path d="M8.2 86.4 h5.4 l-2.7 3.4 z" fill="#ffffff"/>
<text x="16.00" y="90.77" font-size="7.7" fill="#ffffff" textLength="44.60" lengthAdjust="spacingAndGlyphs" >USDJPY,Daily</text>
<path d="M5.00 453.0V498.0M8.02 453.0V500.5M11.04 453.0V501.8M14.07 453.0V503.0M17.09 453.0V503.5M38.25 453.0V500.5M41.27 453.0V496.8M44.29 453.0V493.0M47.31 453.0V488.0M50.34 453.0V483.0M53.36 453.0V479.2M56.38 453.0V475.5M59.41 453.0V473.0M62.43 453.0V470.5M65.45 453.0V468.0M68.47 453.0V463.0M71.50 453.0V454.2M137.99 453.0V404.2M141.01 453.0V409.2M144.03 453.0V413.0M147.06 453.0V410.5M150.08 453.0V413.0M153.10 453.0V415.0M156.12 453.0V415.5M159.15 453.0V414.2M174.26 453.0V413.0M177.28 453.0V414.2M180.31 453.0V416.8M183.33 453.0V418.0M186.35 453.0V421.8M189.37 453.0V426.8M192.40 453.0V434.2M195.42 453.0V441.8M198.44 453.0V449.2M219.60 453.0V461.8M222.62 453.0V458.0M225.64 453.0V454.2M277.02 453.0V415.0M280.05 453.0V416.0M283.07 453.0V417.5M286.09 453.0V420.0M289.12 453.0V423.0M292.14 453.0V426.8M295.16 453.0V431.8M298.18 453.0V435.5M301.20 453.0V439.2M304.23 453.0V442.5M307.25 453.0V444.2M310.27 453.0V446.0M313.30 453.0V448.0M316.32 453.0V451.0M319.34 453.0V452.2M394.90 453.0V489.2M397.93 453.0V490.0M400.95 453.0V490.5M419.08 453.0V490.5M422.11 453.0V488.0M425.13 453.0V484.2M428.15 453.0V480.5M431.17 453.0V478.0M434.19 453.0V475.5M437.22 453.0V473.0M440.24 453.0V470.5M443.26 453.0V468.0M446.28 453.0V465.5M449.31 453.0V463.0M452.33 453.0V459.2M455.35 453.0V455.5M458.38 453.0V454.2M461.40 453.0V453.8M464.42 453.0V453.8M467.44 453.0V453.8M518.83 453.0V500.5M521.85 453.0V499.2M524.87 453.0V498.0M527.89 453.0V495.5M530.91 453.0V488.0M533.94 453.0V481.8M536.96 453.0V479.2M539.98 453.0V478.0M543.00 453.0V475.5M546.03 453.0V470.5M549.05 453.0V465.5M552.07 453.0V455.5M609.50 453.0V461.8M609.50 453.0V460.0M612.52 453.0V458.5M615.54 453.0V457.5M618.57 453.0V456.8M621.59 453.0V456.8M624.61 453.0V455.5M627.63 453.0V454.2M630.66 453.0V453.8M651.81 453.0V450.0M654.84 453.0V451.8M706.22 453.0V431.8M709.24 453.0V434.2M712.26 453.0V436.0M715.29 453.0V435.5M718.31 453.0V433.0M721.33 453.0V431.8M733.42 453.0V433.0M736.44 453.0V436.0M739.47 453.0V439.2M742.49 453.0V441.2M745.51 453.0V442.5M748.53 453.0V443.0M751.56 453.0V443.8M754.58 453.0V444.8M757.60 453.0V445.5M760.62 453.0V446.2M763.65 453.0V446.8M766.67 453.0V447.5M769.69 453.0V448.0M772.72 453.0V448.5M775.74 453.0V449.5M778.76 453.0V450.5M781.78 453.0V451.0M784.80 453.0V451.8M787.83 453.0V452.2M812.01 453.0V452.2M815.03 453.0V452.2M818.05 453.0V452.2M821.08 453.0V452.2M833.16 453.0V453.8M860.37 453.0V448.5M863.39 453.0V450.0M866.41 453.0V451.5" stroke="#9c9c9c" stroke-width="1.05" fill="none"/>
<path d="M20.11 453.0V503.0M23.13 453.0V504.2M26.16 453.0V505.5M29.18 453.0V506.8M32.20 453.0V508.0M35.23 453.0V504.2M201.46 453.0V455.5M204.48 453.0V459.2M207.51 453.0V463.0M207.51 453.0V465.5M210.53 453.0V468.0M213.55 453.0V466.8M216.57 453.0V464.2M322.36 453.0V454.2M325.38 453.0V456.8M328.41 453.0V458.0M331.43 453.0V459.2M334.45 453.0V460.5M337.48 453.0V465.5M340.50 453.0V473.0M343.52 453.0V478.0M346.54 453.0V480.0M349.56 453.0V479.2M352.59 453.0V476.8M355.61 453.0V475.5M358.63 453.0V476.8M361.65 453.0V479.2M364.68 453.0V479.2M367.70 453.0V480.5M370.72 453.0V484.2M373.75 453.0V488.0M376.77 453.0V490.5M379.79 453.0V493.0M382.81 453.0V494.2M385.83 453.0V493.0M388.86 453.0V490.5M391.88 453.0V489.2M403.97 453.0V491.8M406.99 453.0V493.0M410.01 453.0V494.2M413.04 453.0V494.2M416.06 453.0V491.8M470.46 453.0V459.2M473.49 453.0V464.2M476.51 453.0V468.0M476.51 453.0V469.2M479.53 453.0V471.8M482.56 453.0V476.8M485.58 453.0V483.0M488.60 453.0V488.0M491.62 453.0V493.0M494.64 453.0V498.0M497.67 453.0V503.0M500.69 453.0V506.8M503.71 453.0V509.2M506.74 453.0V510.5M509.76 453.0V510.5M512.78 453.0V506.8M515.80 453.0V504.2M573.23 453.0V453.8M576.25 453.0V455.5M579.27 453.0V460.5M582.30 453.0V463.0M585.32 453.0V462.5M588.34 453.0V461.8M591.37 453.0V460.5M594.39 453.0V460.0M597.41 453.0V461.8M600.43 453.0V463.0M603.46 453.0V464.2M606.48 453.0V464.2M657.86 453.0V453.8M660.88 453.0V455.0M663.90 453.0V454.5M666.93 453.0V453.8M790.85 453.0V453.8M793.87 453.0V453.8M827.12 453.0V454.2M830.14 453.0V454.8" stroke="#b80000" stroke-width="1.05" fill="none"/>
<path d="M74.52 453.0V446.8M77.54 453.0V441.8M80.56 453.0V436.8M83.58 453.0V430.5M86.61 453.0V426.8M89.63 453.0V423.0M92.65 453.0V420.5M95.67 453.0V418.0M98.70 453.0V416.8M101.72 453.0V416.0M104.74 453.0V415.5M107.77 453.0V414.2M110.79 453.0V410.5M113.81 453.0V408.0M116.83 453.0V406.8M119.86 453.0V405.5M122.88 453.0V404.2M125.90 453.0V403.0M128.92 453.0V402.5M131.94 453.0V402.5M134.97 453.0V403.0M162.17 453.0V411.8M165.19 453.0V409.2M168.22 453.0V410.5M171.24 453.0V411.8M228.66 453.0V451.8M231.69 453.0V448.0M234.71 453.0V443.0M237.73 453.0V435.5M240.75 453.0V429.2M243.78 453.0V424.2M246.80 453.0V420.5M249.82 453.0V418.0M252.84 453.0V415.5M255.87 453.0V415.5M258.89 453.0V415.0M261.91 453.0V414.5M264.94 453.0V414.2M267.96 453.0V414.2M270.98 453.0V414.2M274.00 453.0V414.5M555.10 453.0V450.5M558.12 453.0V446.8M561.14 453.0V446.0M564.16 453.0V446.8M567.18 453.0V449.2M570.21 453.0V451.8M633.68 453.0V451.0M636.70 453.0V448.0M639.73 453.0V445.5M642.75 453.0V445.5M645.77 453.0V446.8M648.79 453.0V449.2M669.95 453.0V451.8M672.97 453.0V449.2M676.00 453.0V446.8M679.02 453.0V445.0M682.04 453.0V441.8M685.06 453.0V438.0M688.09 453.0V434.2M691.11 453.0V431.8M694.13 453.0V430.5M697.15 453.0V426.8M700.17 453.0V425.5M703.20 453.0V428.0M724.36 453.0V430.0M727.38 453.0V425.5M730.40 453.0V430.5M796.89 453.0V451.8M799.92 453.0V450.5M802.94 453.0V448.8M805.96 453.0V451.8M808.99 453.0V452.0M845.25 453.0V451.0M848.28 453.0V446.0M851.30 453.0V443.5M854.32 453.0V443.5M857.35 453.0V445.0M869.43 453.0V445.5M872.46 453.0V438.8M875.48 453.0V432.5M878.50 453.0V425.5M881.52 453.0V424.0" stroke="#0000b8" stroke-width="1.05" fill="none"/>
<path d="M5.0 511.8C6.2 510.9 10.0 508.2 12.5 506.8C15.0 505.3 17.5 503.7 20.0 503.0C22.5 502.3 25.0 502.1 27.5 502.5C30.0 502.9 32.5 505.4 35.0 505.5C37.5 505.6 40.0 504.2 42.5 503.0C45.0 501.8 47.5 500.1 50.0 498.0C52.5 495.9 55.0 493.4 57.5 490.5C60.0 487.6 62.5 484.0 65.0 480.5C67.5 477.0 70.0 473.4 72.5 469.2C75.0 465.1 77.5 460.3 80.0 455.5C82.5 450.7 85.0 444.7 87.5 440.5C90.0 436.3 92.5 433.4 95.0 430.5C97.5 427.6 100.0 425.1 102.5 423.0C105.0 420.9 107.5 419.7 110.0 418.0C112.5 416.3 115.0 414.7 117.5 413.0C120.0 411.3 122.5 409.5 125.0 408.0C127.5 406.5 130.0 405.0 132.5 404.2C135.0 403.5 137.5 403.3 140.0 403.5C142.5 403.7 145.0 404.5 147.5 405.5C150.0 406.5 152.5 408.2 155.0 409.2C157.5 410.3 160.0 411.2 162.5 411.8C165.0 412.3 167.5 412.4 170.0 412.5C172.5 412.6 175.0 412.2 177.5 412.2C180.0 412.3 182.5 412.0 185.0 413.0C187.5 414.0 190.0 415.5 192.5 418.0C195.0 420.5 197.5 424.2 200.0 428.0C202.5 431.8 205.0 436.3 207.5 440.5C210.0 444.7 212.5 449.5 215.0 453.0C217.5 456.5 220.6 459.9 222.5 461.8C224.4 463.6 224.6 464.2 226.2 464.2C227.9 464.2 230.2 463.6 232.5 461.8C234.8 459.9 237.5 456.3 240.0 453.0C242.5 449.7 244.8 445.5 247.5 441.8C250.2 438.0 253.3 434.0 256.0 430.5C258.7 427.0 261.0 423.0 263.5 420.5C266.0 418.0 268.5 416.5 271.0 415.5C273.5 414.5 276.0 414.3 278.5 414.2C281.0 414.2 283.5 414.4 286.0 415.0C288.5 415.6 291.0 416.5 293.5 418.0C296.0 419.5 298.5 422.0 301.0 424.2C303.5 426.5 306.0 429.0 308.5 431.8C311.0 434.5 313.5 438.0 316.0 440.5C318.5 443.0 321.0 444.9 323.5 446.8C326.0 448.6 328.5 449.9 331.0 451.8C333.5 453.6 336.0 455.7 338.5 458.0C341.0 460.3 343.5 463.2 346.0 465.5C348.5 467.8 351.0 470.0 353.5 471.8C356.0 473.5 358.5 475.0 361.0 476.2C363.5 477.5 366.0 478.5 368.5 479.2C371.0 480.0 373.5 480.0 376.0 481.0C378.5 482.0 381.0 484.2 383.5 485.5C386.0 486.8 388.5 487.8 391.0 488.5C393.5 489.2 396.0 489.6 398.5 490.0C401.0 490.4 403.1 490.8 406.0 491.0C408.9 491.2 412.7 491.2 416.0 491.2C419.3 491.2 423.1 491.6 426.0 491.0C428.9 490.4 431.0 489.0 433.5 487.5C436.0 486.0 438.5 484.0 441.0 481.8C443.5 479.5 446.0 476.8 448.5 474.2C451.0 471.8 453.5 469.1 456.0 466.8C458.5 464.4 461.4 461.5 463.5 460.0C465.6 458.5 466.4 458.2 468.5 458.0C470.6 457.8 473.5 457.7 476.0 458.5C478.5 459.3 481.0 460.8 483.5 463.0C486.0 465.2 488.5 468.6 491.0 471.8C493.5 474.9 496.0 478.2 498.5 481.8C501.0 485.3 503.8 489.9 506.0 493.0C508.2 496.1 510.2 498.6 512.0 500.5C513.8 502.4 515.3 503.4 517.0 504.2C518.7 505.1 519.9 505.9 522.0 505.5C524.1 505.1 527.0 503.6 529.5 501.8C532.0 499.9 534.5 497.0 537.0 494.2C539.5 491.5 542.0 488.8 544.5 485.5C547.0 482.2 549.5 478.0 552.0 474.2C554.5 470.5 557.0 466.3 559.5 463.0C562.0 459.7 564.5 456.4 567.0 454.2C569.5 452.1 572.6 450.7 574.5 450.0C576.4 449.3 576.6 449.5 578.2 450.0C579.9 450.5 582.2 451.8 584.5 453.0C586.8 454.2 589.5 456.2 592.0 457.5C594.5 458.8 597.0 459.7 599.5 460.5C602.0 461.3 604.1 462.2 607.0 462.5C609.9 462.8 614.1 462.8 617.0 462.5C619.9 462.2 622.0 461.5 624.5 460.5C627.0 459.5 629.5 457.9 632.0 456.8C634.5 455.6 637.0 454.5 639.5 453.5C642.0 452.5 644.5 451.3 647.0 450.5C649.5 449.7 652.0 449.0 654.5 448.8C657.0 448.5 659.5 448.9 662.0 449.2C664.5 449.6 667.2 450.5 669.5 451.0C671.8 451.5 673.2 452.4 675.8 452.2C678.2 452.1 681.8 451.3 684.5 450.0C687.2 448.7 689.5 446.2 692.0 444.2C694.5 442.2 697.0 440.0 699.5 438.0C702.0 436.0 704.5 433.8 707.0 432.5C709.5 431.2 711.6 430.7 714.5 430.5C717.4 430.3 721.6 431.0 724.5 431.2C727.4 431.5 729.5 431.5 732.0 431.8C734.5 432.0 737.0 432.1 739.5 432.5C742.0 432.9 744.5 433.3 747.0 434.2C749.5 435.2 752.0 436.6 754.5 438.0C757.0 439.4 759.8 441.5 762.0 442.5C764.2 443.5 765.8 443.7 768.0 444.2C770.2 444.8 773.0 445.4 775.5 446.0C778.0 446.6 780.1 447.2 783.0 448.0C785.9 448.8 789.7 449.9 793.0 450.5C796.3 451.1 799.7 451.5 803.0 451.8C806.3 452.0 808.8 451.8 813.0 451.8C817.2 451.8 824.7 451.5 828.0 451.8C831.3 452.0 830.9 452.7 833.0 453.0C835.1 453.3 838.0 453.6 840.5 453.5C843.0 453.4 845.9 452.8 848.0 452.2C850.1 451.7 851.1 450.8 853.0 450.0C854.9 449.2 857.0 448.0 859.2 447.5C861.5 447.0 864.5 447.8 866.8 447.2C869.0 446.7 870.7 445.4 873.0 444.2C875.3 443.1 879.2 441.1 880.5 440.5" fill="none" stroke="#00b800" stroke-width="1.15" stroke-linejoin="round"/>
<text x="7.00" y="403.77" font-size="7.7" fill="#ffffff" textLength="165.00" lengthAdjust="spacingAndGlyphs" >Signal MACD(12,26,9) 0.0000 1.0926 0.0000 0.4936</text>
<text x="990.20" y="402.07" font-size="7.7" fill="#e6e6e6" textLength="20.70" lengthAdjust="spacingAndGlyphs" >2.1458</text>
<text x="990.20" y="455.77" font-size="7.7" fill="#e6e6e6" textLength="13.80" lengthAdjust="spacingAndGlyphs" >0.00</text>
<text x="990.20" y="516.47" font-size="7.7" fill="#e6e6e6" textLength="24.15" lengthAdjust="spacingAndGlyphs" >-2.4021</text>
<line x1="987.50" y1="453.00" x2="989.90" y2="453.00" stroke="#c8c8c8" stroke-width="1" />
<text x="7.50" y="529.97" font-size="7.7" fill="#ffffff" textLength="113.50" lengthAdjust="spacingAndGlyphs" >Signal Square 0.0500 0.4700 0.2200</text>
<text x="990.60" y="528.57" font-size="7.7" fill="#e6e6e6" >1</text>
<text x="990.60" y="615.07" font-size="7.7" fill="#e6e6e6" >0</text>
<path d="M71 535.9 L74.4 539.6999999999999 H72.5 V544.5 H69.5 V539.6999999999999 H67.6 Z" fill="none" stroke="#00b4c8" stroke-width=".95"/>
<path d="M234 535.9 L237.4 539.6999999999999 H235.5 V544.5 H232.5 V539.6999999999999 H230.6 Z" fill="none" stroke="#00b4c8" stroke-width=".95"/>
<path d="M454.75 535.9 L458.15 539.6999999999999 H456.25 V544.5 H453.25 V539.6999999999999 H451.35 Z" fill="none" stroke="#00b4c8" stroke-width=".95"/>
<path d="M555 535.9 L558.4 539.6999999999999 H556.5 V544.5 H553.5 V539.6999999999999 H551.6 Z" fill="none" stroke="#00b4c8" stroke-width=".95"/>
<path d="M633.25 535.9 L636.65 539.6999999999999 H634.75 V544.5 H631.75 V539.6999999999999 H629.85 Z" fill="none" stroke="#00b4c8" stroke-width=".95"/>
<path d="M675.75 535.9 L679.15 539.6999999999999 H677.25 V544.5 H674.25 V539.6999999999999 H672.35 Z" fill="none" stroke="#00b4c8" stroke-width=".95"/>
<path d="M802.5 535.9 L805.9 539.6999999999999 H804.0 V544.5 H801.0 V539.6999999999999 H799.1 Z" fill="none" stroke="#00b4c8" stroke-width=".95"/>
<path d="M841.75 535.9 L845.15 539.6999999999999 H843.25 V544.5 H840.25 V539.6999999999999 H838.35 Z" fill="none" stroke="#00b4c8" stroke-width=".95"/>
<path d="M200 544.5 L203.4 540.7 H201.5 V535.9 H198.5 V540.7 H196.6 Z" fill="none" stroke="#d9a000" stroke-width=".95"/>
<path d="M317.75 544.5 L321.15 540.7 H319.25 V535.9 H316.25 V540.7 H314.35 Z" fill="none" stroke="#d9a000" stroke-width=".95"/>
<path d="M472.25 544.5 L475.65 540.7 H473.75 V535.9 H470.75 V540.7 H468.85 Z" fill="none" stroke="#d9a000" stroke-width=".95"/>
<path d="M580.75 544.5 L584.15 540.7 H582.25 V535.9 H579.25 V540.7 H577.35 Z" fill="none" stroke="#d9a000" stroke-width=".95"/>
<path d="M662.5 544.5 L665.9 540.7 H664.0 V535.9 H661.0 V540.7 H659.1 Z" fill="none" stroke="#d9a000" stroke-width=".95"/>
<path d="M786.25 544.5 L789.65 540.7 H787.75 V535.9 H784.75 V540.7 H782.85 Z" fill="none" stroke="#d9a000" stroke-width=".95"/>
<path d="M819.75 544.5 L823.15 540.7 H821.25 V535.9 H818.25 V540.7 H816.35 Z" fill="none" stroke="#d9a000" stroke-width=".95"/>
<path d="M12.60 570.1l2.8 3.6M15.40 570.1l-2.8 3.6M15.62 570.1l2.8 3.6M18.42 570.1l-2.8 3.6M18.65 570.1l2.8 3.6M21.45 570.1l-2.8 3.6M21.67 570.1l2.8 3.6M24.47 570.1l-2.8 3.6M24.69 570.1l2.8 3.6M27.49 570.1l-2.8 3.6M27.71 570.1l2.8 3.6M30.51 570.1l-2.8 3.6M30.73 570.1l2.8 3.6M33.53 570.1l-2.8 3.6M33.76 570.1l2.8 3.6M36.56 570.1l-2.8 3.6M187.60 570.1l2.8 3.6M190.40 570.1l-2.8 3.6M190.62 570.1l2.8 3.6M193.42 570.1l-2.8 3.6M193.64 570.1l2.8 3.6M196.44 570.1l-2.8 3.6M196.67 570.1l2.8 3.6M199.47 570.1l-2.8 3.6M199.69 570.1l2.8 3.6M202.49 570.1l-2.8 3.6M202.71 570.1l2.8 3.6M205.51 570.1l-2.8 3.6M205.73 570.1l2.8 3.6M208.53 570.1l-2.8 3.6M208.76 570.1l2.8 3.6M211.56 570.1l-2.8 3.6M211.78 570.1l2.8 3.6M214.58 570.1l-2.8 3.6M214.80 570.1l2.8 3.6M217.60 570.1l-2.8 3.6M293.10 570.1l2.8 3.6M295.90 570.1l-2.8 3.6M299.10 570.1l2.8 3.6M301.90 570.1l-2.8 3.6M302.12 570.1l2.8 3.6M304.92 570.1l-2.8 3.6M308.10 570.1l2.8 3.6M310.90 570.1l-2.8 3.6M311.12 570.1l2.8 3.6M313.92 570.1l-2.8 3.6M314.15 570.1l2.8 3.6M316.94 570.1l-2.8 3.6M317.17 570.1l2.8 3.6M319.97 570.1l-2.8 3.6M320.19 570.1l2.8 3.6M322.99 570.1l-2.8 3.6M323.21 570.1l2.8 3.6M326.01 570.1l-2.8 3.6M326.24 570.1l2.8 3.6M329.03 570.1l-2.8 3.6M329.26 570.1l2.8 3.6M332.06 570.1l-2.8 3.6M332.28 570.1l2.8 3.6M335.08 570.1l-2.8 3.6M335.30 570.1l2.8 3.6M338.10 570.1l-2.8 3.6M338.33 570.1l2.8 3.6M341.12 570.1l-2.8 3.6M341.35 570.1l2.8 3.6M344.15 570.1l-2.8 3.6M344.37 570.1l2.8 3.6M347.17 570.1l-2.8 3.6M347.39 570.1l2.8 3.6M350.19 570.1l-2.8 3.6M368.60 570.1l2.8 3.6M371.40 570.1l-2.8 3.6M371.62 570.1l2.8 3.6M374.42 570.1l-2.8 3.6M374.65 570.1l2.8 3.6M377.44 570.1l-2.8 3.6M377.67 570.1l2.8 3.6M380.47 570.1l-2.8 3.6M380.69 570.1l2.8 3.6M383.49 570.1l-2.8 3.6M383.71 570.1l2.8 3.6M386.51 570.1l-2.8 3.6M404.85 570.1l2.8 3.6M407.65 570.1l-2.8 3.6M407.87 570.1l2.8 3.6M410.67 570.1l-2.8 3.6M410.90 570.1l2.8 3.6M413.69 570.1l-2.8 3.6M468.10 570.1l2.8 3.6M470.90 570.1l-2.8 3.6M471.12 570.1l2.8 3.6M473.92 570.1l-2.8 3.6M474.15 570.1l2.8 3.6M476.94 570.1l-2.8 3.6M477.17 570.1l2.8 3.6M479.97 570.1l-2.8 3.6M480.19 570.1l2.8 3.6M482.99 570.1l-2.8 3.6M483.21 570.1l2.8 3.6M486.01 570.1l-2.8 3.6M486.24 570.1l2.8 3.6M489.03 570.1l-2.8 3.6M489.26 570.1l2.8 3.6M492.06 570.1l-2.8 3.6M492.28 570.1l2.8 3.6M495.08 570.1l-2.8 3.6M495.30 570.1l2.8 3.6M498.10 570.1l-2.8 3.6M498.33 570.1l2.8 3.6M501.12 570.1l-2.8 3.6M501.35 570.1l2.8 3.6M504.15 570.1l-2.8 3.6M504.37 570.1l2.8 3.6M507.17 570.1l-2.8 3.6M507.39 570.1l2.8 3.6M510.19 570.1l-2.8 3.6M565.10 570.1l2.8 3.6M567.90 570.1l-2.8 3.6M568.12 570.1l2.8 3.6M570.92 570.1l-2.8 3.6M571.14 570.1l2.8 3.6M573.94 570.1l-2.8 3.6M574.17 570.1l2.8 3.6M576.97 570.1l-2.8 3.6M577.19 570.1l2.8 3.6M579.99 570.1l-2.8 3.6M580.21 570.1l2.8 3.6M583.01 570.1l-2.8 3.6M583.24 570.1l2.8 3.6M586.03 570.1l-2.8 3.6M592.10 570.1l2.8 3.6M594.90 570.1l-2.8 3.6M595.12 570.1l2.8 3.6M597.92 570.1l-2.8 3.6M598.14 570.1l2.8 3.6M600.94 570.1l-2.8 3.6M601.17 570.1l2.8 3.6M603.97 570.1l-2.8 3.6M604.19 570.1l2.8 3.6M606.99 570.1l-2.8 3.6M649.60 570.1l2.8 3.6M652.40 570.1l-2.8 3.6M652.62 570.1l2.8 3.6M655.42 570.1l-2.8 3.6M655.64 570.1l2.8 3.6M658.44 570.1l-2.8 3.6M658.67 570.1l2.8 3.6M661.47 570.1l-2.8 3.6M661.69 570.1l2.8 3.6M664.49 570.1l-2.8 3.6M667.60 570.1l2.8 3.6M670.40 570.1l-2.8 3.6M758.10 570.1l2.8 3.6M760.90 570.1l-2.8 3.6M766.60 570.1l2.8 3.6M769.40 570.1l-2.8 3.6M773.60 570.1l2.8 3.6M776.40 570.1l-2.8 3.6M780.10 570.1l2.8 3.6M782.90 570.1l-2.8 3.6M786.10 570.1l2.8 3.6M788.90 570.1l-2.8 3.6M789.12 570.1l2.8 3.6M791.92 570.1l-2.8 3.6M792.14 570.1l2.8 3.6M794.94 570.1l-2.8 3.6M813.10 570.1l2.8 3.6M815.90 570.1l-2.8 3.6M816.12 570.1l2.8 3.6M818.92 570.1l-2.8 3.6M822.60 570.1l2.8 3.6M825.40 570.1l-2.8 3.6M825.62 570.1l2.8 3.6M828.42 570.1l-2.8 3.6M828.64 570.1l2.8 3.6M831.44 570.1l-2.8 3.6M858.60 570.1l2.8 3.6M861.40 570.1l-2.8 3.6M861.62 570.1l2.8 3.6M864.42 570.1l-2.8 3.6M864.64 570.1l2.8 3.6M867.44 570.1l-2.8 3.6" stroke="#f0be14" stroke-width="1.05" fill="none"/>
<path d="M51.10 570.1l2.8 3.6M53.90 570.1l-2.8 3.6M54.12 570.1l2.8 3.6M56.92 570.1l-2.8 3.6M66.10 570.1l2.8 3.6M68.90 570.1l-2.8 3.6M69.12 570.1l2.8 3.6M71.92 570.1l-2.8 3.6M72.14 570.1l2.8 3.6M74.95 570.1l-2.8 3.6M75.17 570.1l2.8 3.6M77.97 570.1l-2.8 3.6M78.19 570.1l2.8 3.6M80.99 570.1l-2.8 3.6M81.21 570.1l2.8 3.6M84.01 570.1l-2.8 3.6M84.23 570.1l2.8 3.6M87.03 570.1l-2.8 3.6M87.26 570.1l2.8 3.6M90.06 570.1l-2.8 3.6M90.28 570.1l2.8 3.6M93.08 570.1l-2.8 3.6M93.30 570.1l2.8 3.6M96.10 570.1l-2.8 3.6M96.32 570.1l2.8 3.6M99.12 570.1l-2.8 3.6M99.35 570.1l2.8 3.6M102.15 570.1l-2.8 3.6M111.10 570.1l2.8 3.6M113.90 570.1l-2.8 3.6M114.12 570.1l2.8 3.6M116.92 570.1l-2.8 3.6M117.14 570.1l2.8 3.6M119.95 570.1l-2.8 3.6M120.17 570.1l2.8 3.6M122.97 570.1l-2.8 3.6M123.19 570.1l2.8 3.6M125.99 570.1l-2.8 3.6M126.21 570.1l2.8 3.6M129.01 570.1l-2.8 3.6M129.23 570.1l2.8 3.6M132.03 570.1l-2.8 3.6M160.10 570.1l2.8 3.6M162.90 570.1l-2.8 3.6M163.12 570.1l2.8 3.6M165.92 570.1l-2.8 3.6M166.14 570.1l2.8 3.6M168.94 570.1l-2.8 3.6M169.17 570.1l2.8 3.6M171.97 570.1l-2.8 3.6M217.60 570.1l2.8 3.6M220.40 570.1l-2.8 3.6M220.62 570.1l2.8 3.6M223.42 570.1l-2.8 3.6M223.64 570.1l2.8 3.6M226.44 570.1l-2.8 3.6M226.67 570.1l2.8 3.6M229.47 570.1l-2.8 3.6M229.69 570.1l2.8 3.6M232.49 570.1l-2.8 3.6M232.71 570.1l2.8 3.6M235.51 570.1l-2.8 3.6M235.73 570.1l2.8 3.6M238.53 570.1l-2.8 3.6M238.76 570.1l2.8 3.6M241.56 570.1l-2.8 3.6M241.78 570.1l2.8 3.6M244.58 570.1l-2.8 3.6M244.80 570.1l2.8 3.6M247.60 570.1l-2.8 3.6M247.82 570.1l2.8 3.6M250.62 570.1l-2.8 3.6M250.85 570.1l2.8 3.6M253.65 570.1l-2.8 3.6M253.87 570.1l2.8 3.6M256.67 570.1l-2.8 3.6M256.89 570.1l2.8 3.6M259.69 570.1l-2.8 3.6M259.92 570.1l2.8 3.6M262.71 570.1l-2.8 3.6M443.60 570.1l2.8 3.6M446.40 570.1l-2.8 3.6M446.62 570.1l2.8 3.6M449.42 570.1l-2.8 3.6M449.65 570.1l2.8 3.6M452.44 570.1l-2.8 3.6M452.67 570.1l2.8 3.6M455.47 570.1l-2.8 3.6M459.10 570.1l2.8 3.6M461.90 570.1l-2.8 3.6M528.10 570.1l2.8 3.6M530.90 570.1l-2.8 3.6M531.12 570.1l2.8 3.6M533.92 570.1l-2.8 3.6M543.10 570.1l2.8 3.6M545.90 570.1l-2.8 3.6M546.12 570.1l2.8 3.6M548.92 570.1l-2.8 3.6M549.14 570.1l2.8 3.6M551.94 570.1l-2.8 3.6M552.17 570.1l2.8 3.6M554.97 570.1l-2.8 3.6M555.19 570.1l2.8 3.6M557.99 570.1l-2.8 3.6M607.10 570.1l2.8 3.6M609.90 570.1l-2.8 3.6M610.12 570.1l2.8 3.6M612.92 570.1l-2.8 3.6M613.14 570.1l2.8 3.6M615.94 570.1l-2.8 3.6M616.17 570.1l2.8 3.6M618.97 570.1l-2.8 3.6M628.10 570.1l2.8 3.6M630.90 570.1l-2.8 3.6M631.12 570.1l2.8 3.6M633.92 570.1l-2.8 3.6M634.14 570.1l2.8 3.6M636.94 570.1l-2.8 3.6M637.17 570.1l2.8 3.6M639.97 570.1l-2.8 3.6M640.19 570.1l2.8 3.6M642.99 570.1l-2.8 3.6M643.21 570.1l2.8 3.6M646.01 570.1l-2.8 3.6M646.24 570.1l2.8 3.6M649.03 570.1l-2.8 3.6M670.85 570.1l2.8 3.6M673.65 570.1l-2.8 3.6M673.87 570.1l2.8 3.6M676.67 570.1l-2.8 3.6M676.89 570.1l2.8 3.6M679.69 570.1l-2.8 3.6M679.92 570.1l2.8 3.6M682.72 570.1l-2.8 3.6M682.94 570.1l2.8 3.6M685.74 570.1l-2.8 3.6M685.96 570.1l2.8 3.6M688.76 570.1l-2.8 3.6M688.99 570.1l2.8 3.6M691.78 570.1l-2.8 3.6M692.01 570.1l2.8 3.6M694.81 570.1l-2.8 3.6M695.03 570.1l2.8 3.6M697.83 570.1l-2.8 3.6M698.05 570.1l2.8 3.6M700.85 570.1l-2.8 3.6M701.08 570.1l2.8 3.6M703.88 570.1l-2.8 3.6M722.10 570.1l2.8 3.6M724.90 570.1l-2.8 3.6M725.12 570.1l2.8 3.6M727.92 570.1l-2.8 3.6M728.14 570.1l2.8 3.6M730.94 570.1l-2.8 3.6M771.10 570.1l2.8 3.6M773.90 570.1l-2.8 3.6M795.10 570.1l2.8 3.6M797.90 570.1l-2.8 3.6M798.12 570.1l2.8 3.6M800.92 570.1l-2.8 3.6M801.14 570.1l2.8 3.6M803.94 570.1l-2.8 3.6M843.10 570.1l2.8 3.6M845.90 570.1l-2.8 3.6M846.12 570.1l2.8 3.6M848.92 570.1l-2.8 3.6M849.14 570.1l2.8 3.6M851.94 570.1l-2.8 3.6M868.10 570.1l2.8 3.6M870.90 570.1l-2.8 3.6M871.12 570.1l2.8 3.6M873.92 570.1l-2.8 3.6M874.14 570.1l2.8 3.6M876.94 570.1l-2.8 3.6M877.17 570.1l2.8 3.6M879.97 570.1l-2.8 3.6M880.19 570.1l2.8 3.6M882.99 570.1l-2.8 3.6" stroke="#00d2e6" stroke-width="1.05" fill="none"/>
<rect x="5.00" y="593.80" width="38.70" height="4.70" fill="#ffc800" />
<rect x="53.00" y="593.80" width="4.00" height="4.70" fill="#00ffff" />
<rect x="57.00" y="593.80" width="4.00" height="4.70" fill="#ffc800" />
<rect x="62.50" y="593.80" width="78.20" height="4.70" fill="#00ffff" />
<rect x="141.00" y="593.80" width="4.70" height="4.70" fill="#ffc800" />
<rect x="146.00" y="593.80" width="37.70" height="4.70" fill="#00ffff" />
<rect x="183.70" y="593.80" width="35.00" height="4.70" fill="#ffc800" />
<rect x="232.00" y="593.80" width="52.75" height="4.70" fill="#00ffff" />
<rect x="289.25" y="593.80" width="16.75" height="4.70" fill="#ffc800" />
<rect x="308.00" y="593.80" width="43.50" height="4.70" fill="#ffc800" />
<rect x="353.00" y="593.80" width="71.00" height="4.70" fill="#ffc800" />
<rect x="431.00" y="593.80" width="8.25" height="4.70" fill="#ffc800" />
<rect x="440.50" y="593.80" width="21.00" height="4.70" fill="#00ffff" />
<rect x="461.50" y="593.80" width="56.00" height="4.70" fill="#ffc800" />
<rect x="519.00" y="593.80" width="11.00" height="4.70" fill="#ffc800" />
<rect x="530.00" y="593.80" width="6.50" height="4.70" fill="#00ffff" />
<rect x="537.00" y="593.80" width="5.00" height="4.70" fill="#ffc800" />
<rect x="542.00" y="593.80" width="22.50" height="4.70" fill="#00ffff" />
<rect x="564.50" y="593.80" width="20.00" height="4.70" fill="#ffc800" />
<rect x="584.50" y="593.80" width="2.50" height="4.70" fill="#00ffff" />
<rect x="589.00" y="593.80" width="19.00" height="4.70" fill="#ffc800" />
<rect x="608.00" y="593.80" width="11.00" height="4.70" fill="#00ffff" />
<rect x="619.00" y="593.80" width="7.50" height="4.70" fill="#ffc800" />
<rect x="627.00" y="593.80" width="5.50" height="4.70" fill="#00ffff" />
<rect x="634.00" y="593.80" width="8.50" height="4.70" fill="#00ffff" />
<rect x="643.30" y="593.80" width="5.00" height="4.70" fill="#ffc800" />
<rect x="649.00" y="593.80" width="16.75" height="4.70" fill="#ffc800" />
<rect x="667.00" y="593.80" width="5.00" height="4.70" fill="#ffc800" />
<rect x="672.00" y="593.80" width="12.00" height="4.70" fill="#00ffff" />
<rect x="685.00" y="593.80" width="19.00" height="4.70" fill="#00ffff" />
<rect x="704.00" y="593.80" width="7.00" height="4.70" fill="#ffc800" />
<rect x="711.00" y="593.80" width="16.75" height="4.70" fill="#00ffff" />
<rect x="727.75" y="593.80" width="16.75" height="4.70" fill="#ffc800" />
<rect x="744.50" y="593.80" width="7.00" height="4.70" fill="#00ffff" />
<rect x="752.00" y="593.80" width="4.50" height="4.70" fill="#ffc800" />
<rect x="758.00" y="593.80" width="4.75" height="4.70" fill="#ffc800" />
<rect x="764.50" y="593.80" width="7.25" height="4.70" fill="#ffc800" />
<rect x="773.00" y="593.80" width="5.00" height="4.70" fill="#ffc800" />
<rect x="779.25" y="593.80" width="16.75" height="4.70" fill="#ffc800" />
<rect x="796.00" y="593.80" width="7.00" height="4.70" fill="#00ffff" />
<rect x="803.00" y="593.80" width="17.00" height="4.70" fill="#ffc800" />
<rect x="820.00" y="593.80" width="1.75" height="4.70" fill="#00ffff" />
<rect x="821.75" y="593.80" width="10.75" height="4.70" fill="#ffc800" />
<rect x="845.50" y="593.80" width="9.25" height="4.70" fill="#00ffff" />
<rect x="854.75" y="593.80" width="14.00" height="4.70" fill="#ffc800" />
<rect x="868.75" y="593.80" width="15.00" height="4.70" fill="#00ffff" />
<rect x="5.00" y="608.80" width="48.70" height="6.00" fill="#cc0000" />
<rect x="51.40" y="608.80" width="3.20" height="6.00" fill="#0000c8" />
<rect x="55.00" y="608.80" width="7.50" height="6.00" fill="#cc0000" />
<rect x="62.50" y="608.80" width="122.50" height="6.00" fill="#0000c8" />
<rect x="185.00" y="608.80" width="46.00" height="6.00" fill="#cc0000" />
<rect x="231.00" y="608.80" width="57.00" height="6.00" fill="#0000c8" />
<rect x="288.00" y="608.80" width="151.75" height="6.00" fill="#cc0000" />
<rect x="439.75" y="608.80" width="27.00" height="6.00" fill="#0000c8" />
<rect x="466.75" y="608.80" width="64.75" height="6.00" fill="#cc0000" />
<rect x="531.50" y="608.80" width="37.50" height="6.00" fill="#0000c8" />
<rect x="569.00" y="608.80" width="14.25" height="6.00" fill="#cc0000" />
<rect x="583.25" y="608.80" width="1.75" height="6.00" fill="#0000c8" />
<rect x="585.00" y="608.80" width="28.25" height="6.00" fill="#cc0000" />
<rect x="613.25" y="608.80" width="34.50" height="6.00" fill="#0000c8" />
<rect x="647.75" y="608.80" width="17.25" height="6.00" fill="#cc0000" />
<rect x="665.00" y="608.80" width="2.00" height="6.00" fill="#0000c8" />
<rect x="667.00" y="608.80" width="7.00" height="6.00" fill="#cc0000" />
<rect x="674.00" y="608.80" width="51.75" height="6.00" fill="#0000c8" />
<rect x="725.75" y="608.80" width="20.50" height="6.00" fill="#cc0000" />
<rect x="746.25" y="608.80" width="10.25" height="6.00" fill="#0000c8" />
<rect x="756.50" y="608.80" width="22.75" height="6.00" fill="#cc0000" />
<rect x="779.25" y="608.80" width="4.25" height="6.00" fill="#0000c8" />
<rect x="783.50" y="608.80" width="14.50" height="6.00" fill="#cc0000" />
<rect x="798.00" y="608.80" width="3.75" height="6.00" fill="#0000c8" />
<rect x="801.75" y="608.80" width="31.75" height="6.00" fill="#cc0000" />
<rect x="833.50" y="608.80" width="2.00" height="6.00" fill="#0000c8" />
<rect x="835.50" y="608.80" width="10.50" height="6.00" fill="#cc0000" />
<rect x="846.00" y="608.80" width="9.50" height="6.00" fill="#0000c8" />
<rect x="855.50" y="608.80" width="12.00" height="6.00" fill="#cc0000" />
<rect x="867.50" y="608.80" width="17.50" height="6.00" fill="#0000c8" />
<path d="M5.50 610.4l2 2.8M7.50 610.4l-2 2.8M8.52 610.4l2 2.8M10.52 610.4l-2 2.8M11.54 610.4l2 2.8M13.54 610.4l-2 2.8M14.57 610.4l2 2.8M16.57 610.4l-2 2.8M17.59 610.4l2 2.8M19.59 610.4l-2 2.8M20.61 610.4l2 2.8M22.61 610.4l-2 2.8M23.63 610.4l2 2.8M25.63 610.4l-2 2.8M26.66 610.4l2 2.8M28.66 610.4l-2 2.8M29.68 610.4l2 2.8M31.68 610.4l-2 2.8M32.70 610.4l2 2.8M34.70 610.4l-2 2.8M35.73 610.4l2 2.8M37.73 610.4l-2 2.8M38.75 610.4l2 2.8M40.75 610.4l-2 2.8M41.77 610.4l2 2.8M43.77 610.4l-2 2.8M44.79 610.4l2 2.8M46.79 610.4l-2 2.8M47.81 610.4l2 2.8M49.81 610.4l-2 2.8M50.84 610.4l2 2.8M52.84 610.4l-2 2.8M55.50 610.4l2 2.8M57.50 610.4l-2 2.8M58.52 610.4l2 2.8M60.52 610.4l-2 2.8M185.50 610.4l2 2.8M187.50 610.4l-2 2.8M188.52 610.4l2 2.8M190.52 610.4l-2 2.8M191.54 610.4l2 2.8M193.54 610.4l-2 2.8M194.57 610.4l2 2.8M196.57 610.4l-2 2.8M197.59 610.4l2 2.8M199.59 610.4l-2 2.8M200.61 610.4l2 2.8M202.61 610.4l-2 2.8M203.63 610.4l2 2.8M205.63 610.4l-2 2.8M206.66 610.4l2 2.8M208.66 610.4l-2 2.8M209.68 610.4l2 2.8M211.68 610.4l-2 2.8M212.70 610.4l2 2.8M214.70 610.4l-2 2.8M215.72 610.4l2 2.8M217.72 610.4l-2 2.8M218.75 610.4l2 2.8M220.75 610.4l-2 2.8M221.77 610.4l2 2.8M223.77 610.4l-2 2.8M224.79 610.4l2 2.8M226.79 610.4l-2 2.8M227.81 610.4l2 2.8M229.81 610.4l-2 2.8M288.50 610.4l2 2.8M290.50 610.4l-2 2.8M291.52 610.4l2 2.8M293.52 610.4l-2 2.8M294.55 610.4l2 2.8M296.55 610.4l-2 2.8M297.57 610.4l2 2.8M299.57 610.4l-2 2.8M300.59 610.4l2 2.8M302.59 610.4l-2 2.8M303.61 610.4l2 2.8M305.61 610.4l-2 2.8M306.63 610.4l2 2.8M308.63 610.4l-2 2.8M309.66 610.4l2 2.8M311.66 610.4l-2 2.8M312.68 610.4l2 2.8M314.68 610.4l-2 2.8M315.70 610.4l2 2.8M317.70 610.4l-2 2.8M318.73 610.4l2 2.8M320.73 610.4l-2 2.8M321.75 610.4l2 2.8M323.75 610.4l-2 2.8M324.77 610.4l2 2.8M326.77 610.4l-2 2.8M327.79 610.4l2 2.8M329.79 610.4l-2 2.8M330.81 610.4l2 2.8M332.81 610.4l-2 2.8M333.84 610.4l2 2.8M335.84 610.4l-2 2.8M336.86 610.4l2 2.8M338.86 610.4l-2 2.8M339.88 610.4l2 2.8M341.88 610.4l-2 2.8M342.90 610.4l2 2.8M344.90 610.4l-2 2.8M345.93 610.4l2 2.8M347.93 610.4l-2 2.8M348.95 610.4l2 2.8M350.95 610.4l-2 2.8M351.97 610.4l2 2.8M353.97 610.4l-2 2.8M355.00 610.4l2 2.8M357.00 610.4l-2 2.8M358.02 610.4l2 2.8M360.02 610.4l-2 2.8M361.04 610.4l2 2.8M363.04 610.4l-2 2.8M364.06 610.4l2 2.8M366.06 610.4l-2 2.8M367.08 610.4l2 2.8M369.08 610.4l-2 2.8M370.11 610.4l2 2.8M372.11 610.4l-2 2.8M373.13 610.4l2 2.8M375.13 610.4l-2 2.8M376.15 610.4l2 2.8M378.15 610.4l-2 2.8M379.18 610.4l2 2.8M381.18 610.4l-2 2.8M382.20 610.4l2 2.8M384.20 610.4l-2 2.8M385.22 610.4l2 2.8M387.22 610.4l-2 2.8M388.24 610.4l2 2.8M390.24 610.4l-2 2.8M391.26 610.4l2 2.8M393.26 610.4l-2 2.8M394.29 610.4l2 2.8M396.29 610.4l-2 2.8M397.31 610.4l2 2.8M399.31 610.4l-2 2.8M400.33 610.4l2 2.8M402.33 610.4l-2 2.8M403.36 610.4l2 2.8M405.36 610.4l-2 2.8M406.38 610.4l2 2.8M408.38 610.4l-2 2.8M409.40 610.4l2 2.8M411.40 610.4l-2 2.8M412.42 610.4l2 2.8M414.42 610.4l-2 2.8M415.44 610.4l2 2.8M417.44 610.4l-2 2.8M418.47 610.4l2 2.8M420.47 610.4l-2 2.8M421.49 610.4l2 2.8M423.49 610.4l-2 2.8M424.51 610.4l2 2.8M426.51 610.4l-2 2.8M427.53 610.4l2 2.8M429.53 610.4l-2 2.8M430.56 610.4l2 2.8M432.56 610.4l-2 2.8M433.58 610.4l2 2.8M435.58 610.4l-2 2.8M436.60 610.4l2 2.8M438.60 610.4l-2 2.8M467.25 610.4l2 2.8M469.25 610.4l-2 2.8M470.27 610.4l2 2.8M472.27 610.4l-2 2.8M473.30 610.4l2 2.8M475.30 610.4l-2 2.8M476.32 610.4l2 2.8M478.32 610.4l-2 2.8M479.34 610.4l2 2.8M481.34 610.4l-2 2.8M482.36 610.4l2 2.8M484.36 610.4l-2 2.8M485.38 610.4l2 2.8M487.38 610.4l-2 2.8M488.41 610.4l2 2.8M490.41 610.4l-2 2.8M491.43 610.4l2 2.8M493.43 610.4l-2 2.8M494.45 610.4l2 2.8M496.45 610.4l-2 2.8M497.48 610.4l2 2.8M499.48 610.4l-2 2.8M500.50 610.4l2 2.8M502.50 610.4l-2 2.8M503.52 610.4l2 2.8M505.52 610.4l-2 2.8M506.54 610.4l2 2.8M508.54 610.4l-2 2.8M509.56 610.4l2 2.8M511.56 610.4l-2 2.8M512.59 610.4l2 2.8M514.59 610.4l-2 2.8M515.61 610.4l2 2.8M517.61 610.4l-2 2.8M518.63 610.4l2 2.8M520.63 610.4l-2 2.8M521.65 610.4l2 2.8M523.65 610.4l-2 2.8M524.68 610.4l2 2.8M526.68 610.4l-2 2.8M527.70 610.4l2 2.8M529.70 610.4l-2 2.8M569.50 610.4l2 2.8M571.50 610.4l-2 2.8M572.52 610.4l2 2.8M574.52 610.4l-2 2.8M575.54 610.4l2 2.8M577.54 610.4l-2 2.8M578.57 610.4l2 2.8M580.57 610.4l-2 2.8M585.50 610.4l2 2.8M587.50 610.4l-2 2.8M588.52 610.4l2 2.8M590.52 610.4l-2 2.8M591.54 610.4l2 2.8M593.54 610.4l-2 2.8M594.57 610.4l2 2.8M596.57 610.4l-2 2.8M597.59 610.4l2 2.8M599.59 610.4l-2 2.8M600.61 610.4l2 2.8M602.61 610.4l-2 2.8M603.63 610.4l2 2.8M605.63 610.4l-2 2.8M606.66 610.4l2 2.8M608.66 610.4l-2 2.8M609.68 610.4l2 2.8M611.68 610.4l-2 2.8M648.25 610.4l2 2.8M650.25 610.4l-2 2.8M651.27 610.4l2 2.8M653.27 610.4l-2 2.8M654.29 610.4l2 2.8M656.29 610.4l-2 2.8M657.32 610.4l2 2.8M659.32 610.4l-2 2.8M660.34 610.4l2 2.8M662.34 610.4l-2 2.8M667.50 610.4l2 2.8M669.50 610.4l-2 2.8M670.52 610.4l2 2.8M672.52 610.4l-2 2.8M726.25 610.4l2 2.8M728.25 610.4l-2 2.8M729.27 610.4l2 2.8M731.27 610.4l-2 2.8M732.29 610.4l2 2.8M734.29 610.4l-2 2.8M735.32 610.4l2 2.8M737.32 610.4l-2 2.8M738.34 610.4l2 2.8M740.34 610.4l-2 2.8M741.36 610.4l2 2.8M743.36 610.4l-2 2.8M757.00 610.4l2 2.8M759.00 610.4l-2 2.8M760.02 610.4l2 2.8M762.02 610.4l-2 2.8M763.04 610.4l2 2.8M765.04 610.4l-2 2.8M766.07 610.4l2 2.8M768.07 610.4l-2 2.8M769.09 610.4l2 2.8M771.09 610.4l-2 2.8M772.11 610.4l2 2.8M774.11 610.4l-2 2.8M775.13 610.4l2 2.8M777.13 610.4l-2 2.8M784.00 610.4l2 2.8M786.00 610.4l-2 2.8M787.02 610.4l2 2.8M789.02 610.4l-2 2.8M790.04 610.4l2 2.8M792.04 610.4l-2 2.8M793.07 610.4l2 2.8M795.07 610.4l-2 2.8M802.25 610.4l2 2.8M804.25 610.4l-2 2.8M805.27 610.4l2 2.8M807.27 610.4l-2 2.8M808.29 610.4l2 2.8M810.29 610.4l-2 2.8M811.32 610.4l2 2.8M813.32 610.4l-2 2.8M814.34 610.4l2 2.8M816.34 610.4l-2 2.8M817.36 610.4l2 2.8M819.36 610.4l-2 2.8M820.38 610.4l2 2.8M822.38 610.4l-2 2.8M823.41 610.4l2 2.8M825.41 610.4l-2 2.8M826.43 610.4l2 2.8M828.43 610.4l-2 2.8M829.45 610.4l2 2.8M831.45 610.4l-2 2.8M836.00 610.4l2 2.8M838.00 610.4l-2 2.8M839.02 610.4l2 2.8M841.02 610.4l-2 2.8M842.04 610.4l2 2.8M844.04 610.4l-2 2.8M856.00 610.4l2 2.8M858.00 610.4l-2 2.8M859.02 610.4l2 2.8M861.02 610.4l-2 2.8M862.04 610.4l2 2.8M864.04 610.4l-2 2.8" stroke="#ff4040" stroke-width=".75" fill="none" opacity=".95"/>
<path d="M53.80 610.4q-2.2 1.4 0 2.8M64.90 610.4q-2.2 1.4 0 2.8M67.92 610.4q-2.2 1.4 0 2.8M70.95 610.4q-2.2 1.4 0 2.8M73.97 610.4q-2.2 1.4 0 2.8M76.99 610.4q-2.2 1.4 0 2.8M80.01 610.4q-2.2 1.4 0 2.8M83.03 610.4q-2.2 1.4 0 2.8M86.06 610.4q-2.2 1.4 0 2.8M89.08 610.4q-2.2 1.4 0 2.8M92.10 610.4q-2.2 1.4 0 2.8M95.12 610.4q-2.2 1.4 0 2.8M98.15 610.4q-2.2 1.4 0 2.8M101.17 610.4q-2.2 1.4 0 2.8M104.19 610.4q-2.2 1.4 0 2.8M107.22 610.4q-2.2 1.4 0 2.8M110.24 610.4q-2.2 1.4 0 2.8M113.26 610.4q-2.2 1.4 0 2.8M116.28 610.4q-2.2 1.4 0 2.8M119.31 610.4q-2.2 1.4 0 2.8M122.33 610.4q-2.2 1.4 0 2.8M125.35 610.4q-2.2 1.4 0 2.8M128.37 610.4q-2.2 1.4 0 2.8M131.40 610.4q-2.2 1.4 0 2.8M134.42 610.4q-2.2 1.4 0 2.8M137.44 610.4q-2.2 1.4 0 2.8M140.46 610.4q-2.2 1.4 0 2.8M143.48 610.4q-2.2 1.4 0 2.8M146.51 610.4q-2.2 1.4 0 2.8M149.53 610.4q-2.2 1.4 0 2.8M152.55 610.4q-2.2 1.4 0 2.8M155.58 610.4q-2.2 1.4 0 2.8M158.60 610.4q-2.2 1.4 0 2.8M161.62 610.4q-2.2 1.4 0 2.8M164.64 610.4q-2.2 1.4 0 2.8M167.66 610.4q-2.2 1.4 0 2.8M170.69 610.4q-2.2 1.4 0 2.8M173.71 610.4q-2.2 1.4 0 2.8M176.73 610.4q-2.2 1.4 0 2.8M179.76 610.4q-2.2 1.4 0 2.8M182.78 610.4q-2.2 1.4 0 2.8M233.40 610.4q-2.2 1.4 0 2.8M236.42 610.4q-2.2 1.4 0 2.8M239.44 610.4q-2.2 1.4 0 2.8M242.47 610.4q-2.2 1.4 0 2.8M245.49 610.4q-2.2 1.4 0 2.8M248.51 610.4q-2.2 1.4 0 2.8M251.53 610.4q-2.2 1.4 0 2.8M254.56 610.4q-2.2 1.4 0 2.8M257.58 610.4q-2.2 1.4 0 2.8M260.60 610.4q-2.2 1.4 0 2.8M263.62 610.4q-2.2 1.4 0 2.8M266.65 610.4q-2.2 1.4 0 2.8M269.67 610.4q-2.2 1.4 0 2.8M272.69 610.4q-2.2 1.4 0 2.8M275.71 610.4q-2.2 1.4 0 2.8M278.74 610.4q-2.2 1.4 0 2.8M281.76 610.4q-2.2 1.4 0 2.8M284.78 610.4q-2.2 1.4 0 2.8M442.15 610.4q-2.2 1.4 0 2.8M445.17 610.4q-2.2 1.4 0 2.8M448.19 610.4q-2.2 1.4 0 2.8M451.22 610.4q-2.2 1.4 0 2.8M454.24 610.4q-2.2 1.4 0 2.8M457.26 610.4q-2.2 1.4 0 2.8M460.28 610.4q-2.2 1.4 0 2.8M463.31 610.4q-2.2 1.4 0 2.8M533.90 610.4q-2.2 1.4 0 2.8M536.92 610.4q-2.2 1.4 0 2.8M539.94 610.4q-2.2 1.4 0 2.8M542.97 610.4q-2.2 1.4 0 2.8M545.99 610.4q-2.2 1.4 0 2.8M549.01 610.4q-2.2 1.4 0 2.8M552.03 610.4q-2.2 1.4 0 2.8M555.06 610.4q-2.2 1.4 0 2.8M558.08 610.4q-2.2 1.4 0 2.8M561.10 610.4q-2.2 1.4 0 2.8M564.12 610.4q-2.2 1.4 0 2.8M567.15 610.4q-2.2 1.4 0 2.8M615.65 610.4q-2.2 1.4 0 2.8M618.67 610.4q-2.2 1.4 0 2.8M621.69 610.4q-2.2 1.4 0 2.8M624.72 610.4q-2.2 1.4 0 2.8M627.74 610.4q-2.2 1.4 0 2.8M630.76 610.4q-2.2 1.4 0 2.8M633.78 610.4q-2.2 1.4 0 2.8M636.81 610.4q-2.2 1.4 0 2.8M639.83 610.4q-2.2 1.4 0 2.8M642.85 610.4q-2.2 1.4 0 2.8M645.88 610.4q-2.2 1.4 0 2.8M676.40 610.4q-2.2 1.4 0 2.8M679.42 610.4q-2.2 1.4 0 2.8M682.44 610.4q-2.2 1.4 0 2.8M685.47 610.4q-2.2 1.4 0 2.8M688.49 610.4q-2.2 1.4 0 2.8M691.51 610.4q-2.2 1.4 0 2.8M694.53 610.4q-2.2 1.4 0 2.8M697.56 610.4q-2.2 1.4 0 2.8M700.58 610.4q-2.2 1.4 0 2.8M703.60 610.4q-2.2 1.4 0 2.8M706.62 610.4q-2.2 1.4 0 2.8M709.65 610.4q-2.2 1.4 0 2.8M712.67 610.4q-2.2 1.4 0 2.8M715.69 610.4q-2.2 1.4 0 2.8M718.72 610.4q-2.2 1.4 0 2.8M721.74 610.4q-2.2 1.4 0 2.8M724.76 610.4q-2.2 1.4 0 2.8M748.65 610.4q-2.2 1.4 0 2.8M751.67 610.4q-2.2 1.4 0 2.8M754.69 610.4q-2.2 1.4 0 2.8M781.65 610.4q-2.2 1.4 0 2.8M800.40 610.4q-2.2 1.4 0 2.8M848.40 610.4q-2.2 1.4 0 2.8M851.42 610.4q-2.2 1.4 0 2.8M854.44 610.4q-2.2 1.4 0 2.8M869.90 610.4q-2.2 1.4 0 2.8M872.92 610.4q-2.2 1.4 0 2.8M875.94 610.4q-2.2 1.4 0 2.8M878.97 610.4q-2.2 1.4 0 2.8M881.99 610.4q-2.2 1.4 0 2.8" stroke="#4848ff" stroke-width=".8" fill="none" opacity=".95"/>
<line x1="5.00" y1="617.40" x2="5.00" y2="620.20" stroke="#c8c8c8" stroke-width="1" />
<text x="3.80" y="627.57" font-size="7.7" fill="#e6e6e6" textLength="34.70" lengthAdjust="spacingAndGlyphs" >3 Sep 2024</text>
<line x1="53.25" y1="617.40" x2="53.25" y2="620.20" stroke="#c8c8c8" stroke-width="1" />
<text x="52.05" y="627.57" font-size="7.7" fill="#e6e6e6" textLength="38.17" lengthAdjust="spacingAndGlyphs" >25 Sep 2024</text>
<line x1="101.25" y1="617.40" x2="101.25" y2="620.20" stroke="#c8c8c8" stroke-width="1" />
<text x="100.05" y="627.57" font-size="7.7" fill="#e6e6e6" textLength="38.17" lengthAdjust="spacingAndGlyphs" >17 Oct 2024</text>
<line x1="149.50" y1="617.40" x2="149.50" y2="620.20" stroke="#c8c8c8" stroke-width="1" />
<text x="148.30" y="627.57" font-size="7.7" fill="#e6e6e6" textLength="34.70" lengthAdjust="spacingAndGlyphs" >7 Nov 2024</text>
<line x1="198.00" y1="617.40" x2="198.00" y2="620.20" stroke="#c8c8c8" stroke-width="1" />
<text x="196.80" y="627.57" font-size="7.7" fill="#e6e6e6" textLength="38.17" lengthAdjust="spacingAndGlyphs" >29 Nov 2024</text>
<line x1="246.40" y1="617.40" x2="246.40" y2="620.20" stroke="#c8c8c8" stroke-width="1" />
<text x="245.20" y="627.57" font-size="7.7" fill="#e6e6e6" textLength="38.17" lengthAdjust="spacingAndGlyphs" >23 Dec 2024</text>
<line x1="294.75" y1="617.40" x2="294.75" y2="620.20" stroke="#c8c8c8" stroke-width="1" />
<text x="293.55" y="627.57" font-size="7.7" fill="#e6e6e6" textLength="38.17" lengthAdjust="spacingAndGlyphs" >16 Jan 2025</text>
<line x1="343.00" y1="617.40" x2="343.00" y2="620.20" stroke="#c8c8c8" stroke-width="1" />
<text x="341.80" y="627.57" font-size="7.7" fill="#e6e6e6" textLength="34.70" lengthAdjust="spacingAndGlyphs" >7 Feb 2025</text>
<line x1="391.50" y1="617.40" x2="391.50" y2="620.20" stroke="#c8c8c8" stroke-width="1" />
<text x="390.30" y="627.57" font-size="7.7" fill="#e6e6e6" textLength="34.70" lengthAdjust="spacingAndGlyphs" >3 Mar 2025</text>
<line x1="439.75" y1="617.40" x2="439.75" y2="620.20" stroke="#c8c8c8" stroke-width="1" />
<text x="438.55" y="627.57" font-size="7.7" fill="#e6e6e6" textLength="38.17" lengthAdjust="spacingAndGlyphs" >21 Mar 2025</text>
<line x1="488.00" y1="617.40" x2="488.00" y2="620.20" stroke="#c8c8c8" stroke-width="1" />
<text x="486.80" y="627.57" font-size="7.7" fill="#e6e6e6" textLength="38.17" lengthAdjust="spacingAndGlyphs" >11 Apr 2025</text>
<line x1="536.50" y1="617.40" x2="536.50" y2="620.20" stroke="#c8c8c8" stroke-width="1" />
<text x="535.30" y="627.57" font-size="7.7" fill="#e6e6e6" textLength="34.70" lengthAdjust="spacingAndGlyphs" >5 May 2025</text>
<line x1="585.00" y1="617.40" x2="585.00" y2="620.20" stroke="#c8c8c8" stroke-width="1" />
<text x="583.80" y="627.57" font-size="7.7" fill="#e6e6e6" textLength="38.17" lengthAdjust="spacingAndGlyphs" >27 May 2025</text>
<line x1="633.25" y1="617.40" x2="633.25" y2="620.20" stroke="#c8c8c8" stroke-width="1" />
<text x="632.05" y="627.57" font-size="7.7" fill="#e6e6e6" textLength="38.17" lengthAdjust="spacingAndGlyphs" >18 Jun 2025</text>
<line x1="682.00" y1="617.40" x2="682.00" y2="620.20" stroke="#c8c8c8" stroke-width="1" />
<text x="680.80" y="627.57" font-size="7.7" fill="#e6e6e6" textLength="38.17" lengthAdjust="spacingAndGlyphs" >10 Jul 2025</text>
<line x1="730.75" y1="617.40" x2="730.75" y2="620.20" stroke="#c8c8c8" stroke-width="1" />
<text x="729.55" y="627.57" font-size="7.7" fill="#e6e6e6" textLength="34.70" lengthAdjust="spacingAndGlyphs" >1 Aug 2025</text>
<line x1="778.50" y1="617.40" x2="778.50" y2="620.20" stroke="#c8c8c8" stroke-width="1" />
<text x="777.30" y="627.57" font-size="7.7" fill="#e6e6e6" textLength="38.17" lengthAdjust="spacingAndGlyphs" >25 Aug 2025</text>
<line x1="827.00" y1="617.40" x2="827.00" y2="620.20" stroke="#c8c8c8" stroke-width="1" />
<text x="825.80" y="627.57" font-size="7.7" fill="#e6e6e6" textLength="38.17" lengthAdjust="spacingAndGlyphs" >16 Sep 2025</text>
<line x1="875.50" y1="617.40" x2="875.50" y2="620.20" stroke="#c8c8c8" stroke-width="1" />
<text x="874.30" y="627.57" font-size="7.7" fill="#e6e6e6" textLength="34.70" lengthAdjust="spacingAndGlyphs" >8 Oct 2025</text>
<rect x="14.05" y="100.05" width="106.6" height="192.7" fill="#808080" stroke="#ff4500" stroke-width="3.5"/>
<text x="24.60" y="117.75" font-size="11.8" fill="#e8e8e8" font-weight="500" textLength="59.40" lengthAdjust="spacingAndGlyphs" >通貨別強弱</text>
<text x="24.60" y="132.85" font-size="11.8" fill="#e8e8e8" font-weight="500" textLength="76.00" lengthAdjust="spacingAndGlyphs" >時間:15　足:3</text>
<text x="23.80" y="147.53" font-size="11.2" fill="#00ff00" textLength="57.20" lengthAdjust="spacingAndGlyphs" stroke="#00ff00" stroke-width=".4">1.USD 7.6</text>
<path d="M101.2 139.70000000000002 l5.5 9.8 h-11 z" fill="#00ff00"/>
<text x="23.80" y="167.93" font-size="11.2" fill="#f4a460" textLength="57.20" lengthAdjust="spacingAndGlyphs" stroke="#f4a460" stroke-width=".4">2.NZD  5.6</text>
<path d="M101.2 160.1 l5.5 9.8 h-11 z" fill="#00ff00"/>
<text x="23.80" y="187.63" font-size="11.2" fill="#f4a460" textLength="57.20" lengthAdjust="spacingAndGlyphs" stroke="#f4a460" stroke-width=".4">3.CHF  5.3</text>
<path d="M101.2 179.8 l5.5 9.8 h-11 z" fill="#00ff00"/>
<text x="23.80" y="207.13" font-size="11.2" fill="#ffff00" textLength="57.20" lengthAdjust="spacingAndGlyphs" stroke="#ffff00" stroke-width=".4">4.EUR 4.3</text>
<path d="M101.2 209.1 l5.5 -9.8 h-11 z" fill="#ff0000"/>
<text x="23.80" y="226.53" font-size="11.2" fill="#ffff00" textLength="57.20" lengthAdjust="spacingAndGlyphs" stroke="#ffff00" stroke-width=".4">5.GBP 4.1</text>
<path d="M101.2 228.5 l5.5 -9.8 h-11 z" fill="#ff0000"/>
<text x="23.80" y="246.03" font-size="11.2" fill="#ffff00" textLength="57.20" lengthAdjust="spacingAndGlyphs" stroke="#ffff00" stroke-width=".4">6.JPY  4.0</text>
<path d="M101.2 248.0 l5.5 -9.8 h-11 z" fill="#ff0000"/>
<text x="23.80" y="265.43" font-size="11.2" fill="#ff4500" textLength="57.20" lengthAdjust="spacingAndGlyphs" stroke="#ff4500" stroke-width=".4">7.CAD 2.7</text>
<path d="M101.2 267.4 l5.5 -9.8 h-11 z" fill="#ff0000"/>
<text x="23.80" y="284.83" font-size="11.2" fill="#ff4500" textLength="57.20" lengthAdjust="spacingAndGlyphs" stroke="#ff4500" stroke-width=".4">8.AUD 2.4</text>
<path d="M101.2 286.8 l5.5 -9.8 h-11 z" fill="#ff0000"/>
</svg>
</body></html>
